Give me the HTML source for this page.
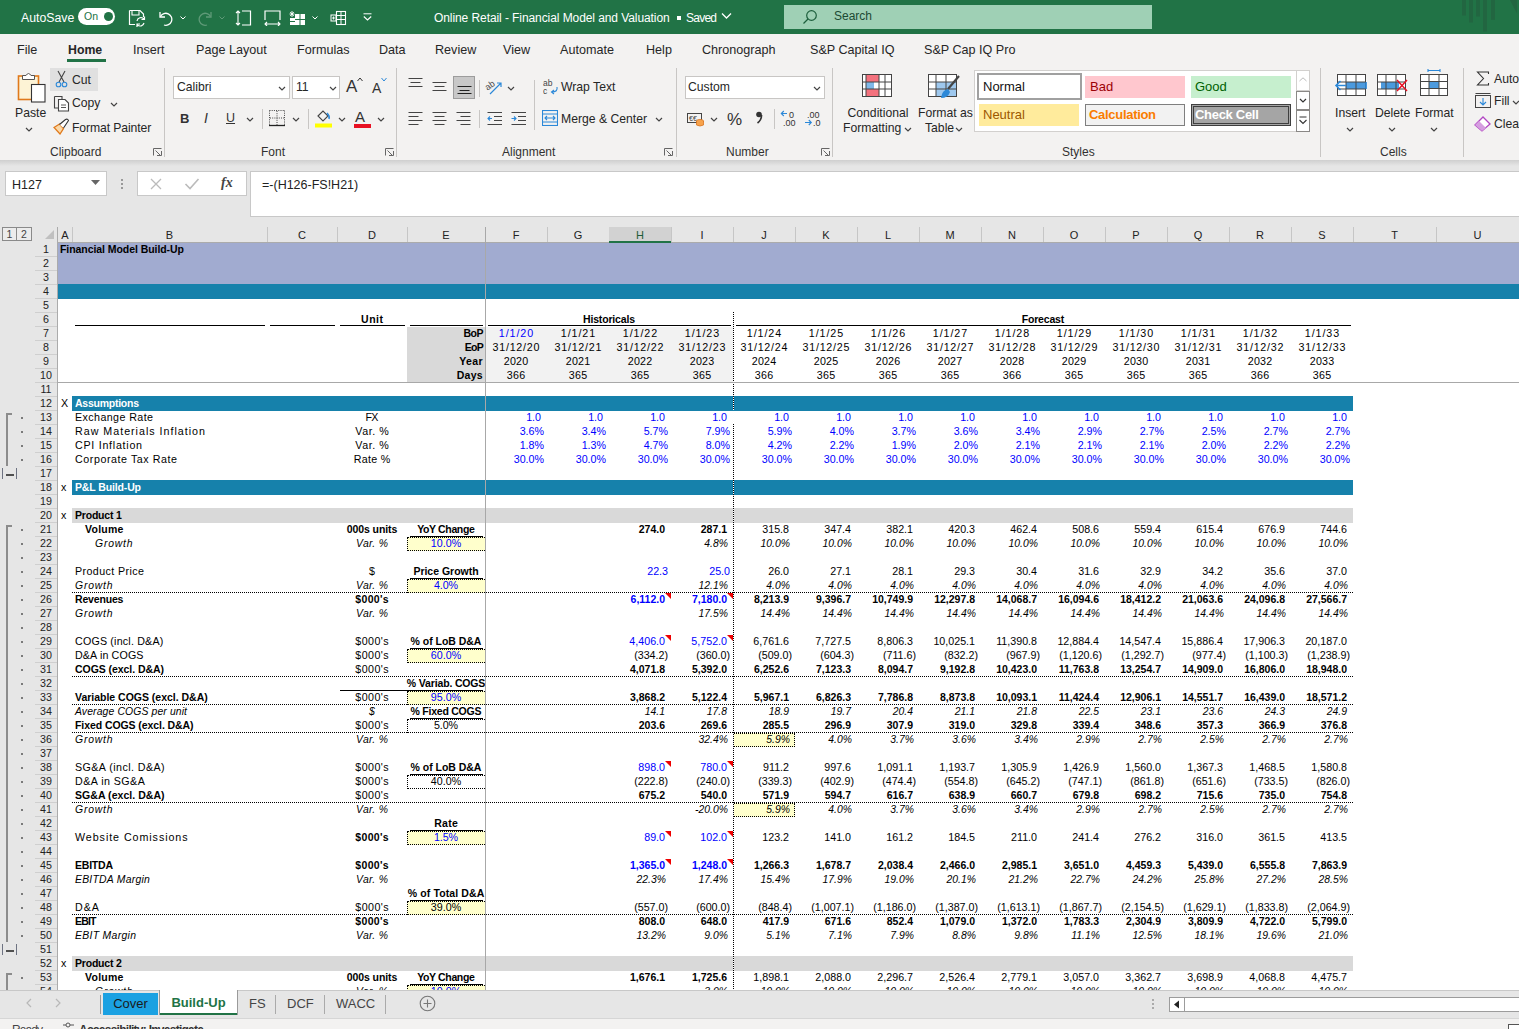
<!DOCTYPE html>
<html><head><meta charset="utf-8"><style>
html,body{margin:0;padding:0;width:1519px;height:1029px;overflow:hidden;background:#fff;}
body{position:relative;font-family:"Liberation Sans", sans-serif;}
body>div,body>svg{position:absolute;}
</style></head><body>
<div style="left:0px;top:0px;width:1519px;height:34px;background:#217346"></div>
<div style="left:21px;top:10px;white-space:pre;color:#fff;font-size:12.3px;line-height:16px;">AutoSave</div>
<div style="left:78px;top:8px;width:37px;height:17px;background:#fff;border-radius:9px"></div>
<div style="left:84px;top:9px;white-space:pre;color:#217346;font-size:10.5px;line-height:15px;">On</div>
<div style="left:104px;top:12px;width:9px;height:9px;background:#217346;border-radius:50%"></div>
<svg style="left:128px;top:9px" width="18" height="18"><path d="M1.5 1.5 H12 L15.5 5 V8 M1.5 1.5 V15.5 H7" stroke="#fff" stroke-width="1.2" fill="none"/><path d="M4 1.5 V6 H11 V1.5" stroke="#fff" stroke-width="1.1" fill="none"/>
<path d="M9 12 A4 4 0 0 1 16 10 M16.5 7.5 V10.5 H13.5 M16 14 A4 4 0 0 1 9.5 16 M9 18 V15 H12" stroke="#fff" stroke-width="1.2" fill="none"/></svg>
<svg style="left:158px;top:10px" width="16" height="16"><path d="M2 2 V7 H7" stroke="#fff" stroke-width="1.3" fill="none"/><path d="M2.5 6.5 A6 6 0 1 1 6 15" stroke="#fff" stroke-width="1.3" fill="none"/></svg>
<svg style="left:180px;top:16px" width="6" height="4"><path d="M0.5 0.5 L3 3 L5.5 0.5" stroke="#fff" stroke-width="1" fill="none"/></svg>
<svg style="left:197px;top:10px" width="16" height="16"><path d="M14 2 V7 H9" stroke="#5f9a78" stroke-width="1.3" fill="none"/><path d="M13.5 6.5 A6 6 0 1 0 10 15" stroke="#5f9a78" stroke-width="1.3" fill="none"/></svg>
<svg style="left:219px;top:16px" width="6" height="4"><path d="M0.5 0.5 L3 3 L5.5 0.5" stroke="#5f9a78" stroke-width="1" fill="none"/></svg>
<svg style="left:235px;top:10px" width="17" height="16"><path d="M7 1 H15.5 V15 H7" stroke="#fff" stroke-width="1.2" fill="none"/><path d="M3 1 V15 M1 3 L3 1 L5 3 M1 13 L3 15 L5 13" stroke="#fff" stroke-width="1.1" fill="none"/></svg>
<svg style="left:264px;top:10px" width="17" height="16"><path d="M1 10 V1 H16 V10" stroke="#fff" stroke-width="1.2" fill="none"/><path d="M1 14 H16 M3 12 L1 14 L3 16 M14 12 L16 14 L14 16" stroke="#fff" stroke-width="1.1" fill="none"/></svg>
<svg style="left:289px;top:10px" width="17" height="16"><rect x="6" y="4" width="10" height="11" fill="#fff"/><rect x="1" y="8" width="5" height="7" fill="#fff"/><path d="M6 9.5 H16 M11 4 V15 M1 11.5 H6" stroke="#217346" stroke-width="1"/><path d="M3 1 V7 M0.5 4 H5.5 M1.2 2 L4.8 6 M4.8 2 L1.2 6" stroke="#fff" stroke-width="0.9"/></svg>
<svg style="left:312px;top:16px" width="6" height="4"><path d="M0.5 0.5 L3 3 L5.5 0.5" stroke="#fff" stroke-width="1" fill="none"/></svg>
<svg style="left:330px;top:10px" width="17" height="16"><rect x="6.5" y="1.5" width="9" height="13" fill="none" stroke="#fff" stroke-width="1.1"/><path d="M6.5 5.5 H15.5 M6.5 9.5 H15.5 M11 1.5 V14.5" stroke="#fff" stroke-width="1"/><rect x="1" y="5" width="5" height="6" fill="none" stroke="#fff" stroke-width="1"/><path d="M3.5 6.5 V9.5 M2 8 H5" stroke="#fff" stroke-width="0.9"/></svg>
<svg style="left:363px;top:13px" width="9" height="8"><path d="M0.5 0.8 H8.5" stroke="#fff" stroke-width="1"/><path d="M0.8 3.5 L4.5 7 L8.2 3.5" stroke="#fff" stroke-width="1.1" fill="none"/></svg>
<svg style="left:1440px;top:0px" width="79" height="34"><g fill="#226641"><rect x="22" y="0" width="4" height="15.5"/><rect x="29" y="0" width="4" height="22.5"/><rect x="36" y="0" width="4" height="16.5"/><rect x="43" y="0" width="4" height="31.5"/><rect x="51" y="0" width="4" height="19.8"/><path d="M70 0 H77 V13.5 Z"/></g></svg>
<div style="left:434px;top:10px;white-space:pre;color:#fff;font-size:12px;line-height:16px;letter-spacing:-0.08px;">Online Retail - Financial Model and Valuation</div>
<div style="left:677px;top:16px;width:4px;height:4px;background:#fff"></div>
<div style="left:686px;top:10px;white-space:pre;color:#fff;font-size:12px;line-height:16px;letter-spacing:-0.758px;">Saved</div>
<svg style="left:721px;top:12px" width="11" height="8"><path d="M1 1.5 L5.5 6 L10 1.5" stroke="#fff" stroke-width="1.3" fill="none"/></svg>
<div style="left:784px;top:5px;width:368px;height:24px;background:#9fd0b5"></div>
<svg style="left:802px;top:9px" width="16" height="16"><circle cx="9.5" cy="6.5" r="4.8" stroke="#1d5e3c" stroke-width="1.2" fill="none"/><path d="M6 10 L1.5 14.5" stroke="#1d5e3c" stroke-width="1.3"/></svg>
<div style="left:834px;top:8px;white-space:pre;color:#1c4a33;font-size:12px;line-height:17px;">Search</div>
<div style="left:0px;top:34px;width:1519px;height:126px;background:#f3f2f1"></div>
<div style="left:17px;top:42px;white-space:pre;color:#262626;font-size:12.6px;line-height:16px;">File</div>
<div style="left:68px;top:42px;white-space:pre;color:#262626;font-size:12.6px;line-height:16px;font-weight:bold;font-size:12.3px;">Home</div>
<div style="left:133px;top:42px;white-space:pre;color:#262626;font-size:12.6px;line-height:16px;">Insert</div>
<div style="left:196px;top:42px;white-space:pre;color:#262626;font-size:12.6px;line-height:16px;">Page Layout</div>
<div style="left:297px;top:42px;white-space:pre;color:#262626;font-size:12.6px;line-height:16px;">Formulas</div>
<div style="left:379px;top:42px;white-space:pre;color:#262626;font-size:12.6px;line-height:16px;">Data</div>
<div style="left:435px;top:42px;white-space:pre;color:#262626;font-size:12.6px;line-height:16px;">Review</div>
<div style="left:503px;top:42px;white-space:pre;color:#262626;font-size:12.6px;line-height:16px;">View</div>
<div style="left:560px;top:42px;white-space:pre;color:#262626;font-size:12.6px;line-height:16px;">Automate</div>
<div style="left:646px;top:42px;white-space:pre;color:#262626;font-size:12.6px;line-height:16px;">Help</div>
<div style="left:702px;top:42px;white-space:pre;color:#262626;font-size:12.6px;line-height:16px;">Chronograph</div>
<div style="left:810px;top:42px;white-space:pre;color:#262626;font-size:12.6px;line-height:16px;">S&amp;P Capital IQ</div>
<div style="left:924px;top:42px;white-space:pre;color:#262626;font-size:12.6px;line-height:16px;">S&amp;P Cap IQ Pro</div>
<div style="left:67px;top:59px;width:39px;height:3px;background:#217346"></div>
<svg style="left:17px;top:71px" width="30" height="33">
<rect x="1.5" y="5" width="20" height="23.5" fill="#fdf3d5" stroke="#e0791b" stroke-width="1.6"/>
<path d="M5.5 8.5 V4.5 H9 Q11.5 0.5 14 4.5 H17.5 V8.5 Z" fill="#fff" stroke="#555" stroke-width="1"/>
<rect x="14.5" y="13.5" width="13.5" height="17.5" fill="#fff" stroke="#333" stroke-width="1.1"/>
</svg>
<div style="left:15px;top:106px;white-space:pre;color:#262626;font-size:12.2px;line-height:15px;">Paste</div>
<svg style="left:25px;top:127px" width="8" height="5"><path d="M1 1 L4 4 L7 1" stroke="#444" stroke-width="1.2" fill="none"/></svg>
<div style="left:50px;top:68px;width:48px;height:23px;background:#e0e0e0"></div>
<svg style="left:55px;top:70px" width="13" height="18">
<path d="M3 1 L9 12 M10 1 L4 12" stroke="#444" stroke-width="1.1"/>
<circle cx="3.5" cy="14.5" r="2.3" stroke="#2b88d8" stroke-width="1.1" fill="none"/><circle cx="9.5" cy="14.5" r="2.3" stroke="#2b88d8" stroke-width="1.1" fill="none"/>
</svg>
<div style="left:72px;top:73px;white-space:pre;color:#262626;font-size:12.2px;line-height:15px;">Cut</div>
<svg style="left:53px;top:95px" width="17" height="17">
<path d="M1.5 1.5 H9 V4 M1.5 1.5 V13 H5" stroke="#444" stroke-width="1.1" fill="none"/>
<path d="M5.5 4.5 H12 L15.5 8 V16 H5.5 Z" stroke="#444" stroke-width="1.1" fill="#fff"/>
<path d="M8 10 H13 M8 12.5 H13" stroke="#444" stroke-width="0.9"/>
</svg>
<div style="left:72px;top:96px;white-space:pre;color:#262626;font-size:12.2px;line-height:15px;">Copy</div>
<svg style="left:110px;top:102px" width="8" height="5"><path d="M1 1 L4 4 L7 1" stroke="#444" stroke-width="1.2" fill="none"/></svg>
<svg style="left:53px;top:118px" width="17" height="17">
<path d="M1 9.5 L6.5 6 L10.5 10.5 L7 16 Z" fill="#fbd9a8" stroke="#e0791b" stroke-width="1.3"/>
<path d="M6.5 6.5 L12.5 1.5 Q14.5 0.5 15.5 2.5 L10.5 10" stroke="#333" stroke-width="1.1" fill="#fff"/>
</svg>
<div style="left:72px;top:121px;white-space:pre;color:#262626;font-size:12.2px;line-height:15px;letter-spacing:-0.1px;">Format Painter</div>
<div style="left:50px;top:145px;white-space:pre;color:#323130;font-size:12px;line-height:15px;">Clipboard</div>
<svg style="left:153px;top:148px" width="9" height="8"><path d="M0.5 7.5 V0.5 H8.5 M8.5 3 V7.5 H4 M2.5 2.5 L7 7" stroke="#666" stroke-width="1" fill="none"/></svg>
<div style="left:164px;top:68px;width:1px;height:89px;background:#c8c6c4"></div>
<div style="left:173px;top:76px;width:117px;height:23px;background:#fff;border:1px solid #c8c6c4;box-sizing:border-box"></div>
<div style="left:177px;top:80px;white-space:pre;color:#262626;font-size:12.2px;line-height:15px;">Calibri</div>
<svg style="left:278px;top:86px" width="8" height="5"><path d="M1 1 L4 4 L7 1" stroke="#444" stroke-width="1.2" fill="none"/></svg>
<div style="left:292px;top:76px;width:48px;height:23px;background:#fff;border:1px solid #c8c6c4;box-sizing:border-box"></div>
<div style="left:296px;top:80px;white-space:pre;color:#262626;font-size:12.2px;line-height:15px;">11</div>
<svg style="left:329px;top:86px" width="8" height="5"><path d="M1 1 L4 4 L7 1" stroke="#444" stroke-width="1.2" fill="none"/></svg>
<div style="left:346px;top:77px;white-space:pre;color:#333;font-size:17px;line-height:19px;">A</div>
<svg style="left:357px;top:77px" width="6" height="5"><path d="M0.5 4 L3 1 L5.5 4" stroke="#333" stroke-width="1" fill="none"/></svg>
<div style="left:372px;top:80px;white-space:pre;color:#333;font-size:14px;line-height:17px;">A</div>
<svg style="left:381px;top:77px" width="6" height="5"><path d="M0.5 1 L3 4 L5.5 1" stroke="#2b88d8" stroke-width="1" fill="none"/></svg>
<div style="left:180px;top:111px;white-space:pre;color:#333;font-size:13px;font-weight:bold;line-height:16px;">B</div>
<div style="left:204px;top:110px;white-space:pre;color:#333;font-size:14px;font-style:italic;line-height:17px;">I</div>
<div style="left:226px;top:110px;white-space:pre;color:#333;font-size:12.5px;line-height:16px;text-decoration:underline;">U</div>
<svg style="left:246px;top:117px" width="8" height="5"><path d="M1 1 L4 4 L7 1" stroke="#444" stroke-width="1.2" fill="none"/></svg>
<div style="left:262px;top:109px;width:1px;height:20px;background:#c8c6c4"></div>
<svg style="left:269px;top:110px" width="16" height="17"><path d="M0.5 0.5 H15.5 M0.5 0.5 V15 M15.5 0.5 V15 M8 1 V15 M1 8 H15" stroke="#444" stroke-width="1" stroke-dasharray="1 1.2" fill="none"/><path d="M0 15.5 H16" stroke="#222" stroke-width="1.3"/></svg>
<svg style="left:292px;top:117px" width="8" height="5"><path d="M1 1 L4 4 L7 1" stroke="#444" stroke-width="1.2" fill="none"/></svg>
<div style="left:308px;top:109px;width:1px;height:20px;background:#c8c6c4"></div>
<svg style="left:315px;top:108px" width="18" height="20"><path d="M3 8 L8 3 L13 8 L8 13 Z" fill="none" stroke="#444" stroke-width="1.1"/><path d="M12 5 Q15 8 14 11" stroke="#2b88d8" stroke-width="1.5" fill="none"/><rect x="0" y="15.5" width="17" height="4" fill="#ffff00"/></svg>
<svg style="left:338px;top:117px" width="8" height="5"><path d="M1 1 L4 4 L7 1" stroke="#444" stroke-width="1.2" fill="none"/></svg>
<div style="left:355px;top:108px;white-space:pre;color:#333;font-size:15px;line-height:17px;">A</div>
<div style="left:354px;top:124px;width:17px;height:4px;background:#e81123"></div>
<svg style="left:377px;top:117px" width="8" height="5"><path d="M1 1 L4 4 L7 1" stroke="#444" stroke-width="1.2" fill="none"/></svg>
<div style="left:261px;top:145px;white-space:pre;color:#323130;font-size:12px;line-height:15px;">Font</div>
<svg style="left:385px;top:148px" width="9" height="8"><path d="M0.5 7.5 V0.5 H8.5 M8.5 3 V7.5 H4 M2.5 2.5 L7 7" stroke="#666" stroke-width="1" fill="none"/></svg>
<div style="left:396px;top:68px;width:1px;height:89px;background:#c8c6c4"></div>
<svg style="left:408px;top:77px" width="16" height="14"><path d="M0.5 1.5 H14.5 M2.5 5.5 H12.5 M0.5 9.5 H14.5 " stroke="#444" stroke-width="1.1"/></svg>
<svg style="left:432px;top:79px" width="16" height="14"><path d="M0.5 3.5 H14.5 M2.5 7.5 H12.5 M0.5 11.5 H14.5 " stroke="#444" stroke-width="1.1"/></svg>
<div style="left:453px;top:76px;width:22px;height:23px;background:#c8c8c8;border:1px solid #9c9c9c;box-sizing:border-box"></div>
<svg style="left:457px;top:81px" width="16" height="14"><path d="M0.5 5.5 H14.5 M2.5 9.5 H12.5 M0.5 12.5 H14.5 " stroke="#222" stroke-width="1.1"/></svg>
<div style="left:479px;top:80px;width:1px;height:17px;background:#c8c6c4"></div>
<svg style="left:485px;top:79px" width="20" height="17"><text x="1" y="9" font-size="9" font-family="Liberation Sans" fill="#444" transform="rotate(-35 6 8)">ab</text><path d="M5 15 L16 4 M12 4 H16 V8" stroke="#2b88d8" stroke-width="1.2" fill="none"/></svg>
<svg style="left:507px;top:86px" width="8" height="5"><path d="M1 1 L4 4 L7 1" stroke="#444" stroke-width="1.2" fill="none"/></svg>
<div style="left:534px;top:80px;width:1px;height:50px;background:#c8c6c4"></div>
<svg style="left:543px;top:78px" width="16" height="18"><text x="0" y="8" font-size="8.5" font-family="Liberation Sans" fill="#444">ab</text><text x="0" y="16" font-size="8.5" font-family="Liberation Sans" fill="#444">c</text><path d="M14 9 Q15 14 9 14 M11 12 L8.5 14 L11 16" stroke="#2b88d8" stroke-width="1.1" fill="none"/></svg>
<div style="left:561px;top:80px;white-space:pre;color:#262626;font-size:12.2px;line-height:15px;">Wrap Text</div>
<svg style="left:408px;top:111px" width="16" height="14"><path d="M0.5 1.5 H14.5 M0.5 5.5 H10.5 M0.5 9.5 H14.5 M0.5 13.5 H10.5 " stroke="#444" stroke-width="1.1"/></svg>
<svg style="left:432px;top:111px" width="16" height="14"><path d="M0.5 1.5 H14.5 M2.5 5.5 H12.5 M0.5 9.5 H14.5 M2.5 13.5 H12.5 " stroke="#444" stroke-width="1.1"/></svg>
<svg style="left:456px;top:111px" width="16" height="14"><path d="M0.5 1.5 H14.5 M4.5 5.5 H14.5 M0.5 9.5 H14.5 M4.5 13.5 H14.5 " stroke="#444" stroke-width="1.1"/></svg>
<div style="left:479px;top:110px;width:1px;height:18px;background:#c8c6c4"></div>
<svg style="left:487px;top:111px" width="16" height="14"><path d="M0.5 1.5 H15 M7 5.5 H15 M7 9.5 H15 M0.5 13.5 H15" stroke="#444" stroke-width="1.1"/><path d="M5 7.5 H0.8 M3 5.5 L1 7.5 L3 9.5" stroke="#2b88d8" stroke-width="1.1" fill="none"/></svg>
<svg style="left:511px;top:111px" width="16" height="14"><path d="M0.5 1.5 H15 M7 5.5 H15 M7 9.5 H15 M0.5 13.5 H15" stroke="#444" stroke-width="1.1"/><path d="M0.5 7.5 H5 M3 5.5 L5 7.5 L3 9.5" stroke="#2b88d8" stroke-width="1.1" fill="none"/></svg>
<svg style="left:542px;top:110px" width="16" height="16"><rect x="0.5" y="0.5" width="15" height="15" fill="none" stroke="#2b88d8" stroke-width="1.1"/><path d="M0.5 4 H15.5 M0.5 12 H15.5" stroke="#2b88d8"/><path d="M3 8 H13 M5 6 L3 8 L5 10 M11 6 L13 8 L11 10" stroke="#2b88d8" stroke-width="1.1" fill="none"/></svg>
<div style="left:561px;top:112px;white-space:pre;color:#262626;font-size:12.2px;line-height:15px;">Merge &amp; Center</div>
<svg style="left:655px;top:117px" width="8" height="5"><path d="M1 1 L4 4 L7 1" stroke="#444" stroke-width="1.2" fill="none"/></svg>
<div style="left:502px;top:145px;white-space:pre;color:#323130;font-size:12px;line-height:15px;">Alignment</div>
<svg style="left:664px;top:148px" width="9" height="8"><path d="M0.5 7.5 V0.5 H8.5 M8.5 3 V7.5 H4 M2.5 2.5 L7 7" stroke="#666" stroke-width="1" fill="none"/></svg>
<div style="left:676px;top:68px;width:1px;height:89px;background:#c8c6c4"></div>
<div style="left:685px;top:76px;width:140px;height:23px;background:#fff;border:1px solid #c8c6c4;box-sizing:border-box"></div>
<div style="left:688px;top:80px;white-space:pre;color:#262626;font-size:12.2px;line-height:15px;">Custom</div>
<svg style="left:813px;top:86px" width="8" height="5"><path d="M1 1 L4 4 L7 1" stroke="#444" stroke-width="1.2" fill="none"/></svg>
<svg style="left:687px;top:111px" width="18" height="16"><rect x="0.5" y="2.5" width="14" height="9" fill="none" stroke="#444"/><text x="2" y="10" font-size="7" font-family="Liberation Sans" fill="#444">€€</text><ellipse cx="13" cy="10" rx="3.5" ry="1.6" fill="#f7a24b" stroke="#d8751f" stroke-width="0.8"/><path d="M9.5 10 V14 Q13 16 16.5 14 V10" fill="#f7a24b" stroke="#d8751f" stroke-width="0.8"/></svg>
<svg style="left:710px;top:117px" width="8" height="5"><path d="M1 1 L4 4 L7 1" stroke="#444" stroke-width="1.2" fill="none"/></svg>
<div style="left:727px;top:110px;white-space:pre;color:#333;font-size:17px;line-height:19px;">%</div>
<svg style="left:755px;top:111px" width="8" height="14"><circle cx="4" cy="3.5" r="2.8" fill="#333"/><path d="M6.6 4 Q6.5 9 2.5 12" stroke="#333" stroke-width="1.6" fill="none"/></svg>
<div style="left:774px;top:109px;width:1px;height:20px;background:#c8c6c4"></div>
<svg style="left:780px;top:109px" width="19" height="18"><path d="M7 4.5 H1.5 M3.8 2 L1.3 4.5 L3.8 7" stroke="#2b88d8" stroke-width="1.1" fill="none"/><text x="9" y="8.5" font-size="9" font-family="Liberation Sans" fill="#333">0</text><text x="3" y="17" font-size="9" font-family="Liberation Sans" fill="#333">.00</text></svg>
<svg style="left:804px;top:109px" width="19" height="18"><text x="3" y="8.5" font-size="9" font-family="Liberation Sans" fill="#333">.00</text><path d="M1 13.5 H7 M4.8 11 L7.3 13.5 L4.8 16" stroke="#2b88d8" stroke-width="1.1" fill="none"/><text x="9" y="17" font-size="9" font-family="Liberation Sans" fill="#333">.0</text></svg>
<div style="left:726px;top:145px;white-space:pre;color:#323130;font-size:12px;line-height:15px;">Number</div>
<svg style="left:821px;top:148px" width="9" height="8"><path d="M0.5 7.5 V0.5 H8.5 M8.5 3 V7.5 H4 M2.5 2.5 L7 7" stroke="#666" stroke-width="1" fill="none"/></svg>
<div style="left:832px;top:68px;width:1px;height:89px;background:#c8c6c4"></div>
<svg style="left:862px;top:74px" width="31" height="24"><rect x="0.5" y="0.5" width="29" height="22" fill="#fff" stroke="#444"/>
<rect x="4" y="1" width="13" height="7" fill="#f4727e"/><rect x="4" y="8" width="8" height="7" fill="#2b88d8" opacity="0.6"/><rect x="4" y="15" width="13" height="7" fill="#f4727e"/>
<path d="M4 0.5 V22.5 M17 0.5 V22.5 M23 0.5 V22.5 M0.5 8 H29.5 M0.5 15 H29.5" stroke="#444" stroke-width="1"/></svg>
<div style="left:846px;top:106px;width:64px;white-space:pre;color:#262626;font-size:12.2px;line-height:15px;text-align:center;">Conditional</div>
<div style="left:843px;top:121px;white-space:pre;color:#262626;font-size:12.2px;line-height:15px;">Formatting</div>
<svg style="left:904px;top:127px" width="8" height="5"><path d="M1 1 L4 4 L7 1" stroke="#444" stroke-width="1.2" fill="none"/></svg>
<svg style="left:928px;top:74px" width="33" height="26"><rect x="0.5" y="0.5" width="28" height="22" fill="#fff" stroke="#444"/>
<rect x="8" y="8" width="20" height="14" fill="#9ec8ee"/>
<path d="M8 0.5 V22.5 M18 0.5 V22.5 M0.5 8 H28.5 M0.5 15 H28.5" stroke="#444" stroke-width="1"/>
<path d="M31 2 L20 15" stroke="#444" stroke-width="2.2"/><path d="M20 15 Q14 16 13 24 Q20 24 22 18 Z" fill="#2b88d8"/></svg>
<div style="left:918px;top:106px;white-space:pre;color:#262626;font-size:12.2px;line-height:15px;">Format as</div>
<div style="left:925px;top:121px;white-space:pre;color:#262626;font-size:12.2px;line-height:15px;">Table</div>
<svg style="left:955px;top:127px" width="8" height="5"><path d="M1 1 L4 4 L7 1" stroke="#444" stroke-width="1.2" fill="none"/></svg>
<div style="left:974px;top:70px;width:336px;height:62px;background:#fff;border:1px solid #d2d0ce;box-sizing:border-box"></div>
<div style="left:977px;top:73px;width:105px;height:27px;background:#fff;border:2px solid #a0a0a0;box-sizing:border-box"></div>
<div style="left:983px;top:79px;white-space:pre;color:#111;font-size:13px;line-height:15px;">Normal</div>
<div style="left:1085px;top:76px;width:100px;height:22px;background:#ffc7ce"></div>
<div style="left:1090px;top:79px;white-space:pre;color:#9c0006;font-size:13px;line-height:15px;">Bad</div>
<div style="left:1191px;top:76px;width:100px;height:22px;background:#c6efce"></div>
<div style="left:1195px;top:79px;white-space:pre;color:#006100;font-size:13px;line-height:15px;">Good</div>
<div style="left:979px;top:104px;width:100px;height:22px;background:#ffeb9c"></div>
<div style="left:983px;top:107px;white-space:pre;color:#9c5700;font-size:13px;line-height:15px;">Neutral</div>
<div style="left:1085px;top:104px;width:100px;height:22px;background:#f2f2f2;border:1px solid #7f7f7f;box-sizing:border-box"></div>
<div style="left:1089px;top:107px;white-space:pre;color:#fa7d00;font-size:13px;font-weight:bold;line-height:15px;letter-spacing:-0.3px;">Calculation</div>
<div style="left:1191px;top:104px;width:100px;height:22px;background:#a5a5a5;border:3px double #3f3f3f;box-sizing:border-box"></div>
<div style="left:1195px;top:107px;white-space:pre;color:#fff;font-size:13px;font-weight:bold;line-height:15px;letter-spacing:-0.3px;">Check Cell</div>
<div style="left:1296px;top:70px;width:14px;height:21px;background:#fff;border:1px solid #d2d0ce;box-sizing:border-box"></div>
<svg style="left:1299px;top:77px" width="8" height="5"><path d="M0.5 4 L4 0.8 L7.5 4" stroke="#bbb" stroke-width="1" fill="none"/></svg>
<div style="left:1296px;top:91px;width:14px;height:19px;background:#fff;border:1px solid #8a8886;box-sizing:border-box"></div>
<svg style="left:1299px;top:98px" width="8" height="5"><path d="M1 1 L4 4 L7 1" stroke="#333" stroke-width="1.2" fill="none"/></svg>
<div style="left:1296px;top:110px;width:14px;height:22px;background:#fff;border:1px solid #8a8886;box-sizing:border-box"></div>
<svg style="left:1299px;top:116px" width="8" height="9"><path d="M0.5 1 H7.5" stroke="#333"/><path d="M0.5 4 L4 7.5 L7.5 4" stroke="#333" stroke-width="1.1" fill="none"/></svg>
<div style="left:1062px;top:145px;white-space:pre;color:#323130;font-size:12px;line-height:15px;">Styles</div>
<div style="left:1320px;top:68px;width:1px;height:89px;background:#c8c6c4"></div>
<svg style="left:1334px;top:74px" width="34" height="23"><rect x="3.5" y="0.5" width="28" height="21" fill="#fff" stroke="#444"/>
<rect x="12" y="8" width="21" height="7" fill="#2b88d8" opacity="0.85"/>
<path d="M12 0.5 V21.5 M22 0.5 V21.5 M3.5 8 H31.5 M3.5 15 H31.5" stroke="#444"/>
<path d="M12 11.5 H2 M6.5 7 L2 11.5 L6.5 16" stroke="#2b88d8" stroke-width="1.6" fill="none"/></svg>
<div style="left:1335px;top:106px;white-space:pre;color:#262626;font-size:12.2px;line-height:15px;">Insert</div>
<svg style="left:1346px;top:127px" width="8" height="5"><path d="M1 1 L4 4 L7 1" stroke="#444" stroke-width="1.2" fill="none"/></svg>
<svg style="left:1377px;top:74px" width="32" height="23"><rect x="0.5" y="0.5" width="28" height="21" fill="#fff" stroke="#444"/>
<rect x="4" y="8" width="18" height="7" fill="#2b88d8" opacity="0.85"/>
<path d="M9 0.5 V21.5 M19 0.5 V21.5 M0.5 8 H28.5 M0.5 15 H28.5" stroke="#444"/>
<path d="M20 6 L30 17 M30 6 L20 17" stroke="#e81123" stroke-width="1.5"/></svg>
<div style="left:1375px;top:106px;white-space:pre;color:#262626;font-size:12.2px;line-height:15px;">Delete</div>
<svg style="left:1388px;top:127px" width="8" height="5"><path d="M1 1 L4 4 L7 1" stroke="#444" stroke-width="1.2" fill="none"/></svg>
<svg style="left:1420px;top:69px" width="29" height="28"><path d="M8 1.5 H20 M8 0 V3 M20 0 V3" stroke="#2b88d8" stroke-width="1.1"/>
<rect x="0.5" y="5.5" width="27" height="21" fill="#fff" stroke="#444"/>
<rect x="9" y="12.5" width="10" height="7" fill="#2b88d8" opacity="0.85"/>
<path d="M9 5.5 V26.5 M19 5.5 V26.5 M0.5 12.5 H27.5 M0.5 19.5 H27.5" stroke="#444"/></svg>
<div style="left:1415px;top:106px;white-space:pre;color:#262626;font-size:12.2px;line-height:15px;">Format</div>
<svg style="left:1430px;top:127px" width="8" height="5"><path d="M1 1 L4 4 L7 1" stroke="#444" stroke-width="1.2" fill="none"/></svg>
<div style="left:1380px;top:145px;white-space:pre;color:#323130;font-size:12px;line-height:15px;">Cells</div>
<div style="left:1463px;top:68px;width:1px;height:89px;background:#c8c6c4"></div>
<svg style="left:1476px;top:71px" width="14" height="15"><path d="M12.5 3 V1 H1.5 L7.5 7.5 L1.5 14 H12.5 V12" stroke="#333" stroke-width="1.1" fill="none"/></svg>
<div style="left:1494px;top:72px;white-space:pre;color:#262626;font-size:12.2px;line-height:15px;">AutoSum</div>
<svg style="left:1475px;top:93px" width="17" height="15"><rect x="0.5" y="2.5" width="15" height="12" fill="none" stroke="#444"/><path d="M0.5 0.5 H15.5" stroke="#444"/><path d="M8 5 V12 M5 9 L8 12 L11 9" stroke="#2b88d8" stroke-width="1.1" fill="none"/></svg>
<div style="left:1494px;top:94px;white-space:pre;color:#262626;font-size:12.2px;line-height:15px;">Fill</div>
<svg style="left:1512px;top:100px" width="8" height="5"><path d="M1 1 L4 4 L7 1" stroke="#444" stroke-width="1.2" fill="none"/></svg>
<svg style="left:1474px;top:116px" width="17" height="16"><path d="M1 9 L9 1 L16 8 L8 15 Z" fill="#fff" stroke="#b146c2" stroke-width="1.3"/><path d="M1 9 L5 5 L12 12 L8 15 Z" fill="#d59ee0"/></svg>
<div style="left:1494px;top:117px;white-space:pre;color:#262626;font-size:12.2px;line-height:15px;">Clear</div>
<div style="left:0px;top:160px;width:1519px;height:67px;background:#e6e6e6"></div>
<div style="left:0px;top:160px;width:1519px;height:6px;background:linear-gradient(#cfcfcf,#e6e6e6)"></div>
<div style="left:5px;top:171px;width:102px;height:25px;background:#fff;border:1px solid #c8c8c8;box-sizing:border-box"></div>
<div style="left:12px;top:177px;white-space:pre;color:#222;font-size:12.5px;line-height:16px;">H127</div>
<svg style="left:91px;top:180px" width="10" height="6"><path d="M0 0 L9 0 L4.5 5 Z" fill="#666"/></svg>
<div style="left:121px;top:179px;width:2px;height:2px;background:#999"></div>
<div style="left:121px;top:183px;width:2px;height:2px;background:#999"></div>
<div style="left:121px;top:187px;width:2px;height:2px;background:#999"></div>
<div style="left:137px;top:171px;width:110px;height:25px;background:#fff;border:1px solid #c8c8c8;box-sizing:border-box"></div>
<svg style="left:149px;top:177px" width="14" height="14"><path d="M2 2 L12 12 M12 2 L2 12" stroke="#bbb" stroke-width="1.3"/></svg>
<svg style="left:184px;top:177px" width="16" height="14"><path d="M1.5 7 L6 11.5 L14.5 2" stroke="#bbb" stroke-width="1.6" fill="none"/></svg>
<div style="left:221px;top:174px;white-space:pre;color:#444;font-family:'Liberation Serif';font-style:italic;font-weight:bold;font-size:14px;line-height:18px;">fx</div>
<div style="left:250px;top:171px;width:1269px;height:46px;background:#fff;border:1px solid #c8c8c8;border-right:none;box-sizing:border-box"></div>
<div style="left:262px;top:177px;white-space:pre;color:#222;font-size:12.5px;line-height:16px;">=-(H126-FS!H21)</div>
<div style="left:58px;top:242px;width:1461px;height:748px;background:#fff"></div>
<div style="left:0px;top:227px;width:1519px;height:15px;background:#e6e6e6"></div>
<div style="left:0px;top:242px;width:1519px;height:1px;background:#ababab"></div>
<div style="left:0px;top:242px;width:58px;height:748px;background:#e6e6e6"></div>
<div style="left:57px;top:227px;width:1px;height:763px;background:#ababab"></div>
<div style="left:35px;top:256px;width:22px;height:1px;background:#cfcfcf"></div>
<div style="left:35px;top:270px;width:22px;height:1px;background:#cfcfcf"></div>
<div style="left:35px;top:284px;width:22px;height:1px;background:#cfcfcf"></div>
<div style="left:35px;top:298px;width:22px;height:1px;background:#cfcfcf"></div>
<div style="left:35px;top:312px;width:22px;height:1px;background:#cfcfcf"></div>
<div style="left:35px;top:326px;width:22px;height:1px;background:#cfcfcf"></div>
<div style="left:35px;top:340px;width:22px;height:1px;background:#cfcfcf"></div>
<div style="left:35px;top:354px;width:22px;height:1px;background:#cfcfcf"></div>
<div style="left:35px;top:368px;width:22px;height:1px;background:#cfcfcf"></div>
<div style="left:35px;top:382px;width:22px;height:1px;background:#cfcfcf"></div>
<div style="left:35px;top:396px;width:22px;height:1px;background:#cfcfcf"></div>
<div style="left:35px;top:410px;width:22px;height:1px;background:#cfcfcf"></div>
<div style="left:35px;top:424px;width:22px;height:1px;background:#cfcfcf"></div>
<div style="left:35px;top:438px;width:22px;height:1px;background:#cfcfcf"></div>
<div style="left:35px;top:452px;width:22px;height:1px;background:#cfcfcf"></div>
<div style="left:35px;top:466px;width:22px;height:1px;background:#cfcfcf"></div>
<div style="left:35px;top:480px;width:22px;height:1px;background:#cfcfcf"></div>
<div style="left:35px;top:494px;width:22px;height:1px;background:#cfcfcf"></div>
<div style="left:35px;top:508px;width:22px;height:1px;background:#cfcfcf"></div>
<div style="left:35px;top:522px;width:22px;height:1px;background:#cfcfcf"></div>
<div style="left:35px;top:536px;width:22px;height:1px;background:#cfcfcf"></div>
<div style="left:35px;top:550px;width:22px;height:1px;background:#cfcfcf"></div>
<div style="left:35px;top:564px;width:22px;height:1px;background:#cfcfcf"></div>
<div style="left:35px;top:578px;width:22px;height:1px;background:#cfcfcf"></div>
<div style="left:35px;top:592px;width:22px;height:1px;background:#cfcfcf"></div>
<div style="left:35px;top:606px;width:22px;height:1px;background:#cfcfcf"></div>
<div style="left:35px;top:620px;width:22px;height:1px;background:#cfcfcf"></div>
<div style="left:35px;top:634px;width:22px;height:1px;background:#cfcfcf"></div>
<div style="left:35px;top:648px;width:22px;height:1px;background:#cfcfcf"></div>
<div style="left:35px;top:662px;width:22px;height:1px;background:#cfcfcf"></div>
<div style="left:35px;top:676px;width:22px;height:1px;background:#cfcfcf"></div>
<div style="left:35px;top:690px;width:22px;height:1px;background:#cfcfcf"></div>
<div style="left:35px;top:704px;width:22px;height:1px;background:#cfcfcf"></div>
<div style="left:35px;top:718px;width:22px;height:1px;background:#cfcfcf"></div>
<div style="left:35px;top:732px;width:22px;height:1px;background:#cfcfcf"></div>
<div style="left:35px;top:746px;width:22px;height:1px;background:#cfcfcf"></div>
<div style="left:35px;top:760px;width:22px;height:1px;background:#cfcfcf"></div>
<div style="left:35px;top:774px;width:22px;height:1px;background:#cfcfcf"></div>
<div style="left:35px;top:788px;width:22px;height:1px;background:#cfcfcf"></div>
<div style="left:35px;top:802px;width:22px;height:1px;background:#cfcfcf"></div>
<div style="left:35px;top:816px;width:22px;height:1px;background:#cfcfcf"></div>
<div style="left:35px;top:830px;width:22px;height:1px;background:#cfcfcf"></div>
<div style="left:35px;top:844px;width:22px;height:1px;background:#cfcfcf"></div>
<div style="left:35px;top:858px;width:22px;height:1px;background:#cfcfcf"></div>
<div style="left:35px;top:872px;width:22px;height:1px;background:#cfcfcf"></div>
<div style="left:35px;top:886px;width:22px;height:1px;background:#cfcfcf"></div>
<div style="left:35px;top:900px;width:22px;height:1px;background:#cfcfcf"></div>
<div style="left:35px;top:914px;width:22px;height:1px;background:#cfcfcf"></div>
<div style="left:35px;top:928px;width:22px;height:1px;background:#cfcfcf"></div>
<div style="left:35px;top:942px;width:22px;height:1px;background:#cfcfcf"></div>
<div style="left:35px;top:956px;width:22px;height:1px;background:#cfcfcf"></div>
<div style="left:35px;top:970px;width:22px;height:1px;background:#cfcfcf"></div>
<div style="left:35px;top:984px;width:22px;height:1px;background:#cfcfcf"></div>
<div style="left:72px;top:227px;width:1px;height:15px;background:#c6c6c6"></div>
<div style="left:58px;top:228px;width:14px;white-space:pre;color:#222;font-size:11px;line-height:15px;text-align:center;">A</div>
<div style="left:267px;top:227px;width:1px;height:15px;background:#c6c6c6"></div>
<div style="left:72px;top:228px;width:195px;white-space:pre;color:#222;font-size:11px;line-height:15px;text-align:center;">B</div>
<div style="left:337px;top:227px;width:1px;height:15px;background:#c6c6c6"></div>
<div style="left:267px;top:228px;width:70px;white-space:pre;color:#222;font-size:11px;line-height:15px;text-align:center;">C</div>
<div style="left:407px;top:227px;width:1px;height:15px;background:#c6c6c6"></div>
<div style="left:337px;top:228px;width:70px;white-space:pre;color:#222;font-size:11px;line-height:15px;text-align:center;">D</div>
<div style="left:485px;top:227px;width:1px;height:15px;background:#c6c6c6"></div>
<div style="left:407px;top:228px;width:78px;white-space:pre;color:#222;font-size:11px;line-height:15px;text-align:center;">E</div>
<div style="left:547px;top:227px;width:1px;height:15px;background:#c6c6c6"></div>
<div style="left:485px;top:228px;width:62px;white-space:pre;color:#222;font-size:11px;line-height:15px;text-align:center;">F</div>
<div style="left:609px;top:227px;width:1px;height:15px;background:#c6c6c6"></div>
<div style="left:547px;top:228px;width:62px;white-space:pre;color:#222;font-size:11px;line-height:15px;text-align:center;">G</div>
<div style="left:609px;top:227px;width:62px;height:15px;background:#d2d2d2"></div>
<div style="left:609px;top:241px;width:62px;height:2px;background:#217346"></div>
<div style="left:671px;top:227px;width:1px;height:15px;background:#c6c6c6"></div>
<div style="left:609px;top:228px;width:62px;white-space:pre;color:#1e5c38;font-size:11px;line-height:15px;text-align:center;">H</div>
<div style="left:733px;top:227px;width:1px;height:15px;background:#c6c6c6"></div>
<div style="left:671px;top:228px;width:62px;white-space:pre;color:#222;font-size:11px;line-height:15px;text-align:center;">I</div>
<div style="left:795px;top:227px;width:1px;height:15px;background:#c6c6c6"></div>
<div style="left:733px;top:228px;width:62px;white-space:pre;color:#222;font-size:11px;line-height:15px;text-align:center;">J</div>
<div style="left:857px;top:227px;width:1px;height:15px;background:#c6c6c6"></div>
<div style="left:795px;top:228px;width:62px;white-space:pre;color:#222;font-size:11px;line-height:15px;text-align:center;">K</div>
<div style="left:919px;top:227px;width:1px;height:15px;background:#c6c6c6"></div>
<div style="left:857px;top:228px;width:62px;white-space:pre;color:#222;font-size:11px;line-height:15px;text-align:center;">L</div>
<div style="left:981px;top:227px;width:1px;height:15px;background:#c6c6c6"></div>
<div style="left:919px;top:228px;width:62px;white-space:pre;color:#222;font-size:11px;line-height:15px;text-align:center;">M</div>
<div style="left:1043px;top:227px;width:1px;height:15px;background:#c6c6c6"></div>
<div style="left:981px;top:228px;width:62px;white-space:pre;color:#222;font-size:11px;line-height:15px;text-align:center;">N</div>
<div style="left:1105px;top:227px;width:1px;height:15px;background:#c6c6c6"></div>
<div style="left:1043px;top:228px;width:62px;white-space:pre;color:#222;font-size:11px;line-height:15px;text-align:center;">O</div>
<div style="left:1167px;top:227px;width:1px;height:15px;background:#c6c6c6"></div>
<div style="left:1105px;top:228px;width:62px;white-space:pre;color:#222;font-size:11px;line-height:15px;text-align:center;">P</div>
<div style="left:1229px;top:227px;width:1px;height:15px;background:#c6c6c6"></div>
<div style="left:1167px;top:228px;width:62px;white-space:pre;color:#222;font-size:11px;line-height:15px;text-align:center;">Q</div>
<div style="left:1291px;top:227px;width:1px;height:15px;background:#c6c6c6"></div>
<div style="left:1229px;top:228px;width:62px;white-space:pre;color:#222;font-size:11px;line-height:15px;text-align:center;">R</div>
<div style="left:1353px;top:227px;width:1px;height:15px;background:#c6c6c6"></div>
<div style="left:1291px;top:228px;width:62px;white-space:pre;color:#222;font-size:11px;line-height:15px;text-align:center;">S</div>
<div style="left:1436px;top:227px;width:1px;height:15px;background:#c6c6c6"></div>
<div style="left:1353px;top:228px;width:83px;white-space:pre;color:#222;font-size:11px;line-height:15px;text-align:center;">T</div>
<div style="left:1519px;top:227px;width:1px;height:15px;background:#c6c6c6"></div>
<div style="left:1436px;top:228px;width:83px;white-space:pre;color:#222;font-size:11px;line-height:15px;text-align:center;">U</div>
<svg style="left:45px;top:230px" width="10" height="10"><path d="M9 0 L9 9 L0 9 Z" fill="#c0c0c0"/></svg>
<div style="left:2px;top:227px;width:15px;height:14px;border:1px solid #8a8a8a;box-sizing:border-box;background:#ececec"></div>
<div style="left:16px;top:227px;width:16px;height:14px;border:1px solid #8a8a8a;box-sizing:border-box;background:#ececec"></div>
<div style="left:2px;top:227px;width:15px;white-space:pre;color:#444;font-size:10.5px;line-height:14px;text-align:center;">1</div>
<div style="left:16px;top:227px;width:16px;white-space:pre;color:#444;font-size:10.5px;line-height:14px;text-align:center;">2</div>
<div style="left:35px;top:242px;width:22px;white-space:pre;color:#222;font-size:10.7px;line-height:14px;text-align:center;">1</div>
<div style="left:35px;top:256px;width:22px;white-space:pre;color:#222;font-size:10.7px;line-height:14px;text-align:center;">2</div>
<div style="left:35px;top:270px;width:22px;white-space:pre;color:#222;font-size:10.7px;line-height:14px;text-align:center;">3</div>
<div style="left:35px;top:284px;width:22px;white-space:pre;color:#222;font-size:10.7px;line-height:14px;text-align:center;">4</div>
<div style="left:35px;top:298px;width:22px;white-space:pre;color:#222;font-size:10.7px;line-height:14px;text-align:center;">5</div>
<div style="left:35px;top:312px;width:22px;white-space:pre;color:#222;font-size:10.7px;line-height:14px;text-align:center;">6</div>
<div style="left:35px;top:326px;width:22px;white-space:pre;color:#222;font-size:10.7px;line-height:14px;text-align:center;">7</div>
<div style="left:35px;top:340px;width:22px;white-space:pre;color:#222;font-size:10.7px;line-height:14px;text-align:center;">8</div>
<div style="left:35px;top:354px;width:22px;white-space:pre;color:#222;font-size:10.7px;line-height:14px;text-align:center;">9</div>
<div style="left:35px;top:368px;width:22px;white-space:pre;color:#222;font-size:10.7px;line-height:14px;text-align:center;">10</div>
<div style="left:35px;top:382px;width:22px;white-space:pre;color:#222;font-size:10.7px;line-height:14px;text-align:center;">11</div>
<div style="left:35px;top:396px;width:22px;white-space:pre;color:#222;font-size:10.7px;line-height:14px;text-align:center;">12</div>
<div style="left:35px;top:410px;width:22px;white-space:pre;color:#222;font-size:10.7px;line-height:14px;text-align:center;">13</div>
<div style="left:35px;top:424px;width:22px;white-space:pre;color:#222;font-size:10.7px;line-height:14px;text-align:center;">14</div>
<div style="left:35px;top:438px;width:22px;white-space:pre;color:#222;font-size:10.7px;line-height:14px;text-align:center;">15</div>
<div style="left:35px;top:452px;width:22px;white-space:pre;color:#222;font-size:10.7px;line-height:14px;text-align:center;">16</div>
<div style="left:35px;top:466px;width:22px;white-space:pre;color:#222;font-size:10.7px;line-height:14px;text-align:center;">17</div>
<div style="left:35px;top:480px;width:22px;white-space:pre;color:#222;font-size:10.7px;line-height:14px;text-align:center;">18</div>
<div style="left:35px;top:494px;width:22px;white-space:pre;color:#222;font-size:10.7px;line-height:14px;text-align:center;">19</div>
<div style="left:35px;top:508px;width:22px;white-space:pre;color:#222;font-size:10.7px;line-height:14px;text-align:center;">20</div>
<div style="left:35px;top:522px;width:22px;white-space:pre;color:#222;font-size:10.7px;line-height:14px;text-align:center;">21</div>
<div style="left:35px;top:536px;width:22px;white-space:pre;color:#222;font-size:10.7px;line-height:14px;text-align:center;">22</div>
<div style="left:35px;top:550px;width:22px;white-space:pre;color:#222;font-size:10.7px;line-height:14px;text-align:center;">23</div>
<div style="left:35px;top:564px;width:22px;white-space:pre;color:#222;font-size:10.7px;line-height:14px;text-align:center;">24</div>
<div style="left:35px;top:578px;width:22px;white-space:pre;color:#222;font-size:10.7px;line-height:14px;text-align:center;">25</div>
<div style="left:35px;top:592px;width:22px;white-space:pre;color:#222;font-size:10.7px;line-height:14px;text-align:center;">26</div>
<div style="left:35px;top:606px;width:22px;white-space:pre;color:#222;font-size:10.7px;line-height:14px;text-align:center;">27</div>
<div style="left:35px;top:620px;width:22px;white-space:pre;color:#222;font-size:10.7px;line-height:14px;text-align:center;">28</div>
<div style="left:35px;top:634px;width:22px;white-space:pre;color:#222;font-size:10.7px;line-height:14px;text-align:center;">29</div>
<div style="left:35px;top:648px;width:22px;white-space:pre;color:#222;font-size:10.7px;line-height:14px;text-align:center;">30</div>
<div style="left:35px;top:662px;width:22px;white-space:pre;color:#222;font-size:10.7px;line-height:14px;text-align:center;">31</div>
<div style="left:35px;top:676px;width:22px;white-space:pre;color:#222;font-size:10.7px;line-height:14px;text-align:center;">32</div>
<div style="left:35px;top:690px;width:22px;white-space:pre;color:#222;font-size:10.7px;line-height:14px;text-align:center;">33</div>
<div style="left:35px;top:704px;width:22px;white-space:pre;color:#222;font-size:10.7px;line-height:14px;text-align:center;">34</div>
<div style="left:35px;top:718px;width:22px;white-space:pre;color:#222;font-size:10.7px;line-height:14px;text-align:center;">35</div>
<div style="left:35px;top:732px;width:22px;white-space:pre;color:#222;font-size:10.7px;line-height:14px;text-align:center;">36</div>
<div style="left:35px;top:746px;width:22px;white-space:pre;color:#222;font-size:10.7px;line-height:14px;text-align:center;">37</div>
<div style="left:35px;top:760px;width:22px;white-space:pre;color:#222;font-size:10.7px;line-height:14px;text-align:center;">38</div>
<div style="left:35px;top:774px;width:22px;white-space:pre;color:#222;font-size:10.7px;line-height:14px;text-align:center;">39</div>
<div style="left:35px;top:788px;width:22px;white-space:pre;color:#222;font-size:10.7px;line-height:14px;text-align:center;">40</div>
<div style="left:35px;top:802px;width:22px;white-space:pre;color:#222;font-size:10.7px;line-height:14px;text-align:center;">41</div>
<div style="left:35px;top:816px;width:22px;white-space:pre;color:#222;font-size:10.7px;line-height:14px;text-align:center;">42</div>
<div style="left:35px;top:830px;width:22px;white-space:pre;color:#222;font-size:10.7px;line-height:14px;text-align:center;">43</div>
<div style="left:35px;top:844px;width:22px;white-space:pre;color:#222;font-size:10.7px;line-height:14px;text-align:center;">44</div>
<div style="left:35px;top:858px;width:22px;white-space:pre;color:#222;font-size:10.7px;line-height:14px;text-align:center;">45</div>
<div style="left:35px;top:872px;width:22px;white-space:pre;color:#222;font-size:10.7px;line-height:14px;text-align:center;">46</div>
<div style="left:35px;top:886px;width:22px;white-space:pre;color:#222;font-size:10.7px;line-height:14px;text-align:center;">47</div>
<div style="left:35px;top:900px;width:22px;white-space:pre;color:#222;font-size:10.7px;line-height:14px;text-align:center;">48</div>
<div style="left:35px;top:914px;width:22px;white-space:pre;color:#222;font-size:10.7px;line-height:14px;text-align:center;">49</div>
<div style="left:35px;top:928px;width:22px;white-space:pre;color:#222;font-size:10.7px;line-height:14px;text-align:center;">50</div>
<div style="left:35px;top:942px;width:22px;white-space:pre;color:#222;font-size:10.7px;line-height:14px;text-align:center;">51</div>
<div style="left:35px;top:956px;width:22px;white-space:pre;color:#222;font-size:10.7px;line-height:14px;text-align:center;">52</div>
<div style="left:35px;top:970px;width:22px;white-space:pre;color:#222;font-size:10.7px;line-height:14px;text-align:center;">53</div>
<div style="left:35px;top:984px;width:22px;white-space:pre;color:#222;font-size:10.7px;line-height:14px;text-align:center;">54</div>
<div style="left:58px;top:243px;width:1461px;height:42px;background:#a1abd0"></div>
<div style="left:58px;top:284px;width:1461px;height:15px;background:#1681ab"></div>
<div style="left:407px;top:327px;width:78px;height:56px;background:#d9d9d9"></div>
<div style="left:485px;top:327px;width:248px;height:56px;background:#f2f2f2"></div>
<div style="left:72px;top:396px;width:1281px;height:15px;background:#1681ab"></div>
<div style="left:72px;top:480px;width:1281px;height:15px;background:#1681ab"></div>
<div style="left:72px;top:508px;width:1281px;height:15px;background:#d9d9d9"></div>
<div style="left:72px;top:956px;width:1281px;height:15px;background:#d9d9d9"></div>
<div style="left:60px;top:242px;white-space:pre;font-weight:bold;font-size:10.5px;line-height:14px;color:#000;letter-spacing:-0.062px;">Financial Model Build-Up</div>
<div style="left:337px;top:312px;width:70px;white-space:pre;font-weight:bold;font-size:10.5px;color:#000;line-height:14px;text-align:center;letter-spacing:0.459px;text-indent:0.459px;">Unit</div>
<div style="left:485px;top:312px;width:248px;white-space:pre;font-weight:bold;font-size:10.5px;line-height:14px;text-align:center;letter-spacing:-0.170px;text-indent:-0.170px;">Historicals</div>
<div style="left:733px;top:312px;width:620px;white-space:pre;font-weight:bold;font-size:10.5px;line-height:14px;text-align:center;letter-spacing:-0.169px;text-indent:-0.169px;">Forecast</div>
<div style="left:75px;top:325px;width:190px;height:1px;background:#000"></div>
<div style="left:270px;top:325px;width:65px;height:1px;background:#000"></div>
<div style="left:340px;top:325px;width:65px;height:1px;background:#000"></div>
<div style="left:410px;top:325px;width:73px;height:1px;background:#000"></div>
<div style="left:488px;top:325px;width:243px;height:1px;background:#000"></div>
<div style="left:736px;top:325px;width:615px;height:1px;background:#000"></div>
<div style="left:207px;top:326px;width:276px;white-space:pre;font-weight:bold;font-size:10.5px;color:#000;line-height:14px;text-align:right;letter-spacing:-0.500px;margin-right:0.500px;">BoP</div>
<div style="left:207px;top:340px;width:276px;white-space:pre;font-weight:bold;font-size:10.5px;color:#000;line-height:14px;text-align:right;letter-spacing:-0.711px;margin-right:0.711px;">EoP</div>
<div style="left:207px;top:354px;width:276px;white-space:pre;font-weight:bold;font-size:10.5px;color:#000;line-height:14px;text-align:right;letter-spacing:0.399px;margin-right:-0.399px;">Year</div>
<div style="left:207px;top:368px;width:276px;white-space:pre;font-weight:bold;font-size:10.5px;color:#000;line-height:14px;text-align:right;letter-spacing:0.297px;margin-right:-0.297px;">Days</div>
<div style="left:485px;top:326px;width:62px;white-space:pre;font-size:10.7px;color:#0000ff;line-height:14px;text-align:center;letter-spacing:0.916px;text-indent:0.916px;">1/1/20</div>
<div style="left:485px;top:340px;width:62px;white-space:pre;font-size:10.7px;color:#000;line-height:14px;text-align:center;letter-spacing:0.742px;text-indent:0.742px;">31/12/20</div>
<div style="left:485px;top:354px;width:62px;white-space:pre;font-size:10.7px;color:#000;line-height:14px;text-align:center;letter-spacing:0.206px;text-indent:0.206px;">2020</div>
<div style="left:485px;top:368px;width:62px;white-space:pre;font-size:10.7px;color:#000;line-height:14px;text-align:center;letter-spacing:0.328px;text-indent:0.328px;">366</div>
<div style="left:547px;top:326px;width:62px;white-space:pre;font-size:10.7px;color:#000;line-height:14px;text-align:center;letter-spacing:0.916px;text-indent:0.916px;">1/1/21</div>
<div style="left:547px;top:340px;width:62px;white-space:pre;font-size:10.7px;color:#000;line-height:14px;text-align:center;letter-spacing:0.742px;text-indent:0.742px;">31/12/21</div>
<div style="left:547px;top:354px;width:62px;white-space:pre;font-size:10.7px;color:#000;line-height:14px;text-align:center;letter-spacing:0.206px;text-indent:0.206px;">2021</div>
<div style="left:547px;top:368px;width:62px;white-space:pre;font-size:10.7px;color:#000;line-height:14px;text-align:center;letter-spacing:0.328px;text-indent:0.328px;">365</div>
<div style="left:609px;top:326px;width:62px;white-space:pre;font-size:10.7px;color:#000;line-height:14px;text-align:center;letter-spacing:0.916px;text-indent:0.916px;">1/1/22</div>
<div style="left:609px;top:340px;width:62px;white-space:pre;font-size:10.7px;color:#000;line-height:14px;text-align:center;letter-spacing:0.742px;text-indent:0.742px;">31/12/22</div>
<div style="left:609px;top:354px;width:62px;white-space:pre;font-size:10.7px;color:#000;line-height:14px;text-align:center;letter-spacing:0.206px;text-indent:0.206px;">2022</div>
<div style="left:609px;top:368px;width:62px;white-space:pre;font-size:10.7px;color:#000;line-height:14px;text-align:center;letter-spacing:0.328px;text-indent:0.328px;">365</div>
<div style="left:671px;top:326px;width:62px;white-space:pre;font-size:10.7px;color:#000;line-height:14px;text-align:center;letter-spacing:0.916px;text-indent:0.916px;">1/1/23</div>
<div style="left:671px;top:340px;width:62px;white-space:pre;font-size:10.7px;color:#000;line-height:14px;text-align:center;letter-spacing:0.742px;text-indent:0.742px;">31/12/23</div>
<div style="left:671px;top:354px;width:62px;white-space:pre;font-size:10.7px;color:#000;line-height:14px;text-align:center;letter-spacing:0.206px;text-indent:0.206px;">2023</div>
<div style="left:671px;top:368px;width:62px;white-space:pre;font-size:10.7px;color:#000;line-height:14px;text-align:center;letter-spacing:0.328px;text-indent:0.328px;">365</div>
<div style="left:733px;top:326px;width:62px;white-space:pre;font-size:10.7px;color:#000;line-height:14px;text-align:center;letter-spacing:0.916px;text-indent:0.916px;">1/1/24</div>
<div style="left:733px;top:340px;width:62px;white-space:pre;font-size:10.7px;color:#000;line-height:14px;text-align:center;letter-spacing:0.742px;text-indent:0.742px;">31/12/24</div>
<div style="left:733px;top:354px;width:62px;white-space:pre;font-size:10.7px;color:#000;line-height:14px;text-align:center;letter-spacing:0.206px;text-indent:0.206px;">2024</div>
<div style="left:733px;top:368px;width:62px;white-space:pre;font-size:10.7px;color:#000;line-height:14px;text-align:center;letter-spacing:0.328px;text-indent:0.328px;">366</div>
<div style="left:795px;top:326px;width:62px;white-space:pre;font-size:10.7px;color:#000;line-height:14px;text-align:center;letter-spacing:0.916px;text-indent:0.916px;">1/1/25</div>
<div style="left:795px;top:340px;width:62px;white-space:pre;font-size:10.7px;color:#000;line-height:14px;text-align:center;letter-spacing:0.742px;text-indent:0.742px;">31/12/25</div>
<div style="left:795px;top:354px;width:62px;white-space:pre;font-size:10.7px;color:#000;line-height:14px;text-align:center;letter-spacing:0.206px;text-indent:0.206px;">2025</div>
<div style="left:795px;top:368px;width:62px;white-space:pre;font-size:10.7px;color:#000;line-height:14px;text-align:center;letter-spacing:0.328px;text-indent:0.328px;">365</div>
<div style="left:857px;top:326px;width:62px;white-space:pre;font-size:10.7px;color:#000;line-height:14px;text-align:center;letter-spacing:0.916px;text-indent:0.916px;">1/1/26</div>
<div style="left:857px;top:340px;width:62px;white-space:pre;font-size:10.7px;color:#000;line-height:14px;text-align:center;letter-spacing:0.742px;text-indent:0.742px;">31/12/26</div>
<div style="left:857px;top:354px;width:62px;white-space:pre;font-size:10.7px;color:#000;line-height:14px;text-align:center;letter-spacing:0.206px;text-indent:0.206px;">2026</div>
<div style="left:857px;top:368px;width:62px;white-space:pre;font-size:10.7px;color:#000;line-height:14px;text-align:center;letter-spacing:0.328px;text-indent:0.328px;">365</div>
<div style="left:919px;top:326px;width:62px;white-space:pre;font-size:10.7px;color:#000;line-height:14px;text-align:center;letter-spacing:0.916px;text-indent:0.916px;">1/1/27</div>
<div style="left:919px;top:340px;width:62px;white-space:pre;font-size:10.7px;color:#000;line-height:14px;text-align:center;letter-spacing:0.742px;text-indent:0.742px;">31/12/27</div>
<div style="left:919px;top:354px;width:62px;white-space:pre;font-size:10.7px;color:#000;line-height:14px;text-align:center;letter-spacing:0.206px;text-indent:0.206px;">2027</div>
<div style="left:919px;top:368px;width:62px;white-space:pre;font-size:10.7px;color:#000;line-height:14px;text-align:center;letter-spacing:0.328px;text-indent:0.328px;">365</div>
<div style="left:981px;top:326px;width:62px;white-space:pre;font-size:10.7px;color:#000;line-height:14px;text-align:center;letter-spacing:0.916px;text-indent:0.916px;">1/1/28</div>
<div style="left:981px;top:340px;width:62px;white-space:pre;font-size:10.7px;color:#000;line-height:14px;text-align:center;letter-spacing:0.742px;text-indent:0.742px;">31/12/28</div>
<div style="left:981px;top:354px;width:62px;white-space:pre;font-size:10.7px;color:#000;line-height:14px;text-align:center;letter-spacing:0.206px;text-indent:0.206px;">2028</div>
<div style="left:981px;top:368px;width:62px;white-space:pre;font-size:10.7px;color:#000;line-height:14px;text-align:center;letter-spacing:0.328px;text-indent:0.328px;">366</div>
<div style="left:1043px;top:326px;width:62px;white-space:pre;font-size:10.7px;color:#000;line-height:14px;text-align:center;letter-spacing:0.916px;text-indent:0.916px;">1/1/29</div>
<div style="left:1043px;top:340px;width:62px;white-space:pre;font-size:10.7px;color:#000;line-height:14px;text-align:center;letter-spacing:0.742px;text-indent:0.742px;">31/12/29</div>
<div style="left:1043px;top:354px;width:62px;white-space:pre;font-size:10.7px;color:#000;line-height:14px;text-align:center;letter-spacing:0.206px;text-indent:0.206px;">2029</div>
<div style="left:1043px;top:368px;width:62px;white-space:pre;font-size:10.7px;color:#000;line-height:14px;text-align:center;letter-spacing:0.328px;text-indent:0.328px;">365</div>
<div style="left:1105px;top:326px;width:62px;white-space:pre;font-size:10.7px;color:#000;line-height:14px;text-align:center;letter-spacing:0.916px;text-indent:0.916px;">1/1/30</div>
<div style="left:1105px;top:340px;width:62px;white-space:pre;font-size:10.7px;color:#000;line-height:14px;text-align:center;letter-spacing:0.742px;text-indent:0.742px;">31/12/30</div>
<div style="left:1105px;top:354px;width:62px;white-space:pre;font-size:10.7px;color:#000;line-height:14px;text-align:center;letter-spacing:0.206px;text-indent:0.206px;">2030</div>
<div style="left:1105px;top:368px;width:62px;white-space:pre;font-size:10.7px;color:#000;line-height:14px;text-align:center;letter-spacing:0.328px;text-indent:0.328px;">365</div>
<div style="left:1167px;top:326px;width:62px;white-space:pre;font-size:10.7px;color:#000;line-height:14px;text-align:center;letter-spacing:0.916px;text-indent:0.916px;">1/1/31</div>
<div style="left:1167px;top:340px;width:62px;white-space:pre;font-size:10.7px;color:#000;line-height:14px;text-align:center;letter-spacing:0.742px;text-indent:0.742px;">31/12/31</div>
<div style="left:1167px;top:354px;width:62px;white-space:pre;font-size:10.7px;color:#000;line-height:14px;text-align:center;letter-spacing:0.206px;text-indent:0.206px;">2031</div>
<div style="left:1167px;top:368px;width:62px;white-space:pre;font-size:10.7px;color:#000;line-height:14px;text-align:center;letter-spacing:0.328px;text-indent:0.328px;">365</div>
<div style="left:1229px;top:326px;width:62px;white-space:pre;font-size:10.7px;color:#000;line-height:14px;text-align:center;letter-spacing:0.916px;text-indent:0.916px;">1/1/32</div>
<div style="left:1229px;top:340px;width:62px;white-space:pre;font-size:10.7px;color:#000;line-height:14px;text-align:center;letter-spacing:0.742px;text-indent:0.742px;">31/12/32</div>
<div style="left:1229px;top:354px;width:62px;white-space:pre;font-size:10.7px;color:#000;line-height:14px;text-align:center;letter-spacing:0.206px;text-indent:0.206px;">2032</div>
<div style="left:1229px;top:368px;width:62px;white-space:pre;font-size:10.7px;color:#000;line-height:14px;text-align:center;letter-spacing:0.328px;text-indent:0.328px;">366</div>
<div style="left:1291px;top:326px;width:62px;white-space:pre;font-size:10.7px;color:#000;line-height:14px;text-align:center;letter-spacing:0.916px;text-indent:0.916px;">1/1/33</div>
<div style="left:1291px;top:340px;width:62px;white-space:pre;font-size:10.7px;color:#000;line-height:14px;text-align:center;letter-spacing:0.742px;text-indent:0.742px;">31/12/33</div>
<div style="left:1291px;top:354px;width:62px;white-space:pre;font-size:10.7px;color:#000;line-height:14px;text-align:center;letter-spacing:0.206px;text-indent:0.206px;">2033</div>
<div style="left:1291px;top:368px;width:62px;white-space:pre;font-size:10.7px;color:#000;line-height:14px;text-align:center;letter-spacing:0.328px;text-indent:0.328px;">365</div>
<div style="left:61px;top:396px;white-space:pre;font-size:10.7px;font-size:10.7px;color:#000;line-height:14px;">X</div>
<div style="left:75px;top:396px;white-space:pre;font-weight:bold;font-size:10.5px;line-height:14px;color:#fff;letter-spacing:-0.252px;">Assumptions</div>
<div style="left:75px;top:410px;white-space:pre;font-size:10.7px;color:#000;line-height:14px;letter-spacing:0.409px;">Exchange Rate</div>
<div style="left:337px;top:410px;width:70px;white-space:pre;font-size:10.7px;color:#000;line-height:14px;text-align:center;letter-spacing:-0.672px;text-indent:-0.672px;">FX</div>
<div style="left:75px;top:424px;white-space:pre;font-size:10.7px;color:#000;line-height:14px;letter-spacing:0.995px;">Raw Materials Inflation</div>
<div style="left:337px;top:424px;width:70px;white-space:pre;font-size:10.7px;color:#000;line-height:14px;text-align:center;letter-spacing:0.539px;text-indent:0.539px;">Var. %</div>
<div style="left:75px;top:438px;white-space:pre;font-size:10.7px;color:#000;line-height:14px;letter-spacing:0.732px;">CPI Inflation</div>
<div style="left:337px;top:438px;width:70px;white-space:pre;font-size:10.7px;color:#000;line-height:14px;text-align:center;letter-spacing:0.539px;text-indent:0.539px;">Var. %</div>
<div style="left:75px;top:452px;white-space:pre;font-size:10.7px;color:#000;line-height:14px;letter-spacing:0.560px;">Corporate Tax Rate</div>
<div style="left:337px;top:452px;width:70px;white-space:pre;font-size:10.7px;color:#000;line-height:14px;text-align:center;letter-spacing:0.287px;text-indent:0.287px;">Rate %</div>
<div style="left:285px;top:410px;width:256px;white-space:pre;font-size:10.7px;color:#0000ff;line-height:14px;text-align:right;">1.0</div>
<div style="left:347px;top:410px;width:256px;white-space:pre;font-size:10.7px;color:#0000ff;line-height:14px;text-align:right;">1.0</div>
<div style="left:409px;top:410px;width:256px;white-space:pre;font-size:10.7px;color:#0000ff;line-height:14px;text-align:right;">1.0</div>
<div style="left:471px;top:410px;width:256px;white-space:pre;font-size:10.7px;color:#0000ff;line-height:14px;text-align:right;">1.0</div>
<div style="left:533px;top:410px;width:256px;white-space:pre;font-size:10.7px;color:#0000ff;line-height:14px;text-align:right;">1.0</div>
<div style="left:595px;top:410px;width:256px;white-space:pre;font-size:10.7px;color:#0000ff;line-height:14px;text-align:right;">1.0</div>
<div style="left:657px;top:410px;width:256px;white-space:pre;font-size:10.7px;color:#0000ff;line-height:14px;text-align:right;">1.0</div>
<div style="left:719px;top:410px;width:256px;white-space:pre;font-size:10.7px;color:#0000ff;line-height:14px;text-align:right;">1.0</div>
<div style="left:781px;top:410px;width:256px;white-space:pre;font-size:10.7px;color:#0000ff;line-height:14px;text-align:right;">1.0</div>
<div style="left:843px;top:410px;width:256px;white-space:pre;font-size:10.7px;color:#0000ff;line-height:14px;text-align:right;">1.0</div>
<div style="left:905px;top:410px;width:256px;white-space:pre;font-size:10.7px;color:#0000ff;line-height:14px;text-align:right;">1.0</div>
<div style="left:967px;top:410px;width:256px;white-space:pre;font-size:10.7px;color:#0000ff;line-height:14px;text-align:right;">1.0</div>
<div style="left:1029px;top:410px;width:256px;white-space:pre;font-size:10.7px;color:#0000ff;line-height:14px;text-align:right;">1.0</div>
<div style="left:1091px;top:410px;width:256px;white-space:pre;font-size:10.7px;color:#0000ff;line-height:14px;text-align:right;">1.0</div>
<div style="left:285px;top:424px;width:259px;white-space:pre;font-size:10.7px;color:#0000ff;line-height:14px;text-align:right;">3.6%</div>
<div style="left:347px;top:424px;width:259px;white-space:pre;font-size:10.7px;color:#0000ff;line-height:14px;text-align:right;">3.4%</div>
<div style="left:409px;top:424px;width:259px;white-space:pre;font-size:10.7px;color:#0000ff;line-height:14px;text-align:right;">5.7%</div>
<div style="left:471px;top:424px;width:259px;white-space:pre;font-size:10.7px;color:#0000ff;line-height:14px;text-align:right;">7.9%</div>
<div style="left:533px;top:424px;width:259px;white-space:pre;font-size:10.7px;color:#0000ff;line-height:14px;text-align:right;">5.9%</div>
<div style="left:595px;top:424px;width:259px;white-space:pre;font-size:10.7px;color:#0000ff;line-height:14px;text-align:right;">4.0%</div>
<div style="left:657px;top:424px;width:259px;white-space:pre;font-size:10.7px;color:#0000ff;line-height:14px;text-align:right;">3.7%</div>
<div style="left:719px;top:424px;width:259px;white-space:pre;font-size:10.7px;color:#0000ff;line-height:14px;text-align:right;">3.6%</div>
<div style="left:781px;top:424px;width:259px;white-space:pre;font-size:10.7px;color:#0000ff;line-height:14px;text-align:right;">3.4%</div>
<div style="left:843px;top:424px;width:259px;white-space:pre;font-size:10.7px;color:#0000ff;line-height:14px;text-align:right;">2.9%</div>
<div style="left:905px;top:424px;width:259px;white-space:pre;font-size:10.7px;color:#0000ff;line-height:14px;text-align:right;">2.7%</div>
<div style="left:967px;top:424px;width:259px;white-space:pre;font-size:10.7px;color:#0000ff;line-height:14px;text-align:right;">2.5%</div>
<div style="left:1029px;top:424px;width:259px;white-space:pre;font-size:10.7px;color:#0000ff;line-height:14px;text-align:right;">2.7%</div>
<div style="left:1091px;top:424px;width:259px;white-space:pre;font-size:10.7px;color:#0000ff;line-height:14px;text-align:right;">2.7%</div>
<div style="left:285px;top:438px;width:259px;white-space:pre;font-size:10.7px;color:#0000ff;line-height:14px;text-align:right;">1.8%</div>
<div style="left:347px;top:438px;width:259px;white-space:pre;font-size:10.7px;color:#0000ff;line-height:14px;text-align:right;">1.3%</div>
<div style="left:409px;top:438px;width:259px;white-space:pre;font-size:10.7px;color:#0000ff;line-height:14px;text-align:right;">4.7%</div>
<div style="left:471px;top:438px;width:259px;white-space:pre;font-size:10.7px;color:#0000ff;line-height:14px;text-align:right;">8.0%</div>
<div style="left:533px;top:438px;width:259px;white-space:pre;font-size:10.7px;color:#0000ff;line-height:14px;text-align:right;">4.2%</div>
<div style="left:595px;top:438px;width:259px;white-space:pre;font-size:10.7px;color:#0000ff;line-height:14px;text-align:right;">2.2%</div>
<div style="left:657px;top:438px;width:259px;white-space:pre;font-size:10.7px;color:#0000ff;line-height:14px;text-align:right;">1.9%</div>
<div style="left:719px;top:438px;width:259px;white-space:pre;font-size:10.7px;color:#0000ff;line-height:14px;text-align:right;">2.0%</div>
<div style="left:781px;top:438px;width:259px;white-space:pre;font-size:10.7px;color:#0000ff;line-height:14px;text-align:right;">2.1%</div>
<div style="left:843px;top:438px;width:259px;white-space:pre;font-size:10.7px;color:#0000ff;line-height:14px;text-align:right;">2.1%</div>
<div style="left:905px;top:438px;width:259px;white-space:pre;font-size:10.7px;color:#0000ff;line-height:14px;text-align:right;">2.1%</div>
<div style="left:967px;top:438px;width:259px;white-space:pre;font-size:10.7px;color:#0000ff;line-height:14px;text-align:right;">2.0%</div>
<div style="left:1029px;top:438px;width:259px;white-space:pre;font-size:10.7px;color:#0000ff;line-height:14px;text-align:right;">2.2%</div>
<div style="left:1091px;top:438px;width:259px;white-space:pre;font-size:10.7px;color:#0000ff;line-height:14px;text-align:right;">2.2%</div>
<div style="left:285px;top:452px;width:259px;white-space:pre;font-size:10.7px;color:#0000ff;line-height:14px;text-align:right;">30.0%</div>
<div style="left:347px;top:452px;width:259px;white-space:pre;font-size:10.7px;color:#0000ff;line-height:14px;text-align:right;">30.0%</div>
<div style="left:409px;top:452px;width:259px;white-space:pre;font-size:10.7px;color:#0000ff;line-height:14px;text-align:right;">30.0%</div>
<div style="left:471px;top:452px;width:259px;white-space:pre;font-size:10.7px;color:#0000ff;line-height:14px;text-align:right;">30.0%</div>
<div style="left:533px;top:452px;width:259px;white-space:pre;font-size:10.7px;color:#0000ff;line-height:14px;text-align:right;">30.0%</div>
<div style="left:595px;top:452px;width:259px;white-space:pre;font-size:10.7px;color:#0000ff;line-height:14px;text-align:right;">30.0%</div>
<div style="left:657px;top:452px;width:259px;white-space:pre;font-size:10.7px;color:#0000ff;line-height:14px;text-align:right;">30.0%</div>
<div style="left:719px;top:452px;width:259px;white-space:pre;font-size:10.7px;color:#0000ff;line-height:14px;text-align:right;">30.0%</div>
<div style="left:781px;top:452px;width:259px;white-space:pre;font-size:10.7px;color:#0000ff;line-height:14px;text-align:right;">30.0%</div>
<div style="left:843px;top:452px;width:259px;white-space:pre;font-size:10.7px;color:#0000ff;line-height:14px;text-align:right;">30.0%</div>
<div style="left:905px;top:452px;width:259px;white-space:pre;font-size:10.7px;color:#0000ff;line-height:14px;text-align:right;">30.0%</div>
<div style="left:967px;top:452px;width:259px;white-space:pre;font-size:10.7px;color:#0000ff;line-height:14px;text-align:right;">30.0%</div>
<div style="left:1029px;top:452px;width:259px;white-space:pre;font-size:10.7px;color:#0000ff;line-height:14px;text-align:right;">30.0%</div>
<div style="left:1091px;top:452px;width:259px;white-space:pre;font-size:10.7px;color:#0000ff;line-height:14px;text-align:right;">30.0%</div>
<div style="left:61px;top:480px;white-space:pre;font-size:10.7px;font-size:10.7px;color:#000;line-height:14px;">x</div>
<div style="left:75px;top:480px;white-space:pre;font-weight:bold;font-size:10.5px;line-height:14px;color:#fff;letter-spacing:-0.134px;">P&amp;L Build-Up</div>
<div style="left:61px;top:508px;white-space:pre;font-size:10.7px;font-size:10.7px;color:#000;line-height:14px;">x</div>
<div style="left:75px;top:508px;white-space:pre;font-weight:bold;font-size:10.5px;line-height:14px;color:#000;letter-spacing:-0.205px;">Product 1</div>
<div style="left:85px;top:522px;white-space:pre;font-weight:bold;font-size:10.5px;color:#000;line-height:14px;letter-spacing:0.249px;">Volume</div>
<div style="left:337px;top:522px;width:70px;white-space:pre;font-weight:bold;font-size:10.5px;color:#000;line-height:14px;text-align:center;letter-spacing:-0.073px;text-indent:-0.073px;">000s units</div>
<div style="left:407px;top:522px;width:78px;white-space:pre;font-weight:bold;font-size:10.5px;color:#000;line-height:14px;text-align:center;letter-spacing:-0.364px;text-indent:-0.364px;">YoY Change</div>
<div style="left:410px;top:536px;width:73px;height:1px;background:#000"></div>
<div style="left:409px;top:522px;width:256px;white-space:pre;font-weight:bold;font-size:10.5px;color:#000;line-height:14px;text-align:right;">274.0</div>
<div style="left:471px;top:522px;width:256px;white-space:pre;font-weight:bold;font-size:10.5px;color:#000;line-height:14px;text-align:right;">287.1</div>
<div style="left:533px;top:522px;width:256px;white-space:pre;font-size:10.7px;color:#000;line-height:14px;text-align:right;">315.8</div>
<div style="left:595px;top:522px;width:256px;white-space:pre;font-size:10.7px;color:#000;line-height:14px;text-align:right;">347.4</div>
<div style="left:657px;top:522px;width:256px;white-space:pre;font-size:10.7px;color:#000;line-height:14px;text-align:right;">382.1</div>
<div style="left:719px;top:522px;width:256px;white-space:pre;font-size:10.7px;color:#000;line-height:14px;text-align:right;">420.3</div>
<div style="left:781px;top:522px;width:256px;white-space:pre;font-size:10.7px;color:#000;line-height:14px;text-align:right;">462.4</div>
<div style="left:843px;top:522px;width:256px;white-space:pre;font-size:10.7px;color:#000;line-height:14px;text-align:right;">508.6</div>
<div style="left:905px;top:522px;width:256px;white-space:pre;font-size:10.7px;color:#000;line-height:14px;text-align:right;">559.4</div>
<div style="left:967px;top:522px;width:256px;white-space:pre;font-size:10.7px;color:#000;line-height:14px;text-align:right;">615.4</div>
<div style="left:1029px;top:522px;width:256px;white-space:pre;font-size:10.7px;color:#000;line-height:14px;text-align:right;">676.9</div>
<div style="left:1091px;top:522px;width:256px;white-space:pre;font-size:10.7px;color:#000;line-height:14px;text-align:right;">744.6</div>
<div style="left:95px;top:537px;white-space:pre;font-style:italic;font-size:10.4px;color:#000;line-height:14px;letter-spacing:0.800px;">Growth</div>
<div style="left:337px;top:537px;width:70px;white-space:pre;font-style:italic;font-size:10.4px;color:#000;line-height:14px;text-align:center;letter-spacing:0.276px;text-indent:0.276px;">Var. %</div>
<div style="left:407px;top:537px;width:78px;height:14px;background:#ffffcc;border:1px dotted #000;border-right:none;box-sizing:border-box"></div>
<div style="left:407px;top:536px;width:78px;white-space:pre;font-size:10.7px;color:#0000ff;line-height:14px;text-align:center;letter-spacing:0.047px;text-indent:0.047px;">10.0%</div>
<div style="left:471px;top:537px;width:257px;white-space:pre;font-style:italic;font-size:10.4px;color:#000;line-height:14px;text-align:right;">4.8%</div>
<div style="left:533px;top:537px;width:257px;white-space:pre;font-style:italic;font-size:10.4px;color:#000;line-height:14px;text-align:right;">10.0%</div>
<div style="left:595px;top:537px;width:257px;white-space:pre;font-style:italic;font-size:10.4px;color:#000;line-height:14px;text-align:right;">10.0%</div>
<div style="left:657px;top:537px;width:257px;white-space:pre;font-style:italic;font-size:10.4px;color:#000;line-height:14px;text-align:right;">10.0%</div>
<div style="left:719px;top:537px;width:257px;white-space:pre;font-style:italic;font-size:10.4px;color:#000;line-height:14px;text-align:right;">10.0%</div>
<div style="left:781px;top:537px;width:257px;white-space:pre;font-style:italic;font-size:10.4px;color:#000;line-height:14px;text-align:right;">10.0%</div>
<div style="left:843px;top:537px;width:257px;white-space:pre;font-style:italic;font-size:10.4px;color:#000;line-height:14px;text-align:right;">10.0%</div>
<div style="left:905px;top:537px;width:257px;white-space:pre;font-style:italic;font-size:10.4px;color:#000;line-height:14px;text-align:right;">10.0%</div>
<div style="left:967px;top:537px;width:257px;white-space:pre;font-style:italic;font-size:10.4px;color:#000;line-height:14px;text-align:right;">10.0%</div>
<div style="left:1029px;top:537px;width:257px;white-space:pre;font-style:italic;font-size:10.4px;color:#000;line-height:14px;text-align:right;">10.0%</div>
<div style="left:1091px;top:537px;width:257px;white-space:pre;font-style:italic;font-size:10.4px;color:#000;line-height:14px;text-align:right;">10.0%</div>
<div style="left:75px;top:564px;white-space:pre;font-size:10.7px;color:#000;line-height:14px;letter-spacing:0.404px;">Product Price</div>
<div style="left:337px;top:564px;width:70px;white-space:pre;font-size:10.7px;color:#000;line-height:14px;text-align:center;">$</div>
<div style="left:407px;top:564px;width:78px;white-space:pre;font-weight:bold;font-size:10.5px;color:#000;line-height:14px;text-align:center;letter-spacing:-0.014px;text-indent:-0.014px;">Price Growth</div>
<div style="left:410px;top:578px;width:73px;height:1px;background:#000"></div>
<div style="left:409px;top:564px;width:259px;white-space:pre;font-size:10.7px;color:#0000ff;line-height:14px;text-align:right;">22.3</div>
<div style="left:471px;top:564px;width:259px;white-space:pre;font-size:10.7px;color:#0000ff;line-height:14px;text-align:right;">25.0</div>
<div style="left:533px;top:564px;width:256px;white-space:pre;font-size:10.7px;color:#000;line-height:14px;text-align:right;">26.0</div>
<div style="left:595px;top:564px;width:256px;white-space:pre;font-size:10.7px;color:#000;line-height:14px;text-align:right;">27.1</div>
<div style="left:657px;top:564px;width:256px;white-space:pre;font-size:10.7px;color:#000;line-height:14px;text-align:right;">28.1</div>
<div style="left:719px;top:564px;width:256px;white-space:pre;font-size:10.7px;color:#000;line-height:14px;text-align:right;">29.3</div>
<div style="left:781px;top:564px;width:256px;white-space:pre;font-size:10.7px;color:#000;line-height:14px;text-align:right;">30.4</div>
<div style="left:843px;top:564px;width:256px;white-space:pre;font-size:10.7px;color:#000;line-height:14px;text-align:right;">31.6</div>
<div style="left:905px;top:564px;width:256px;white-space:pre;font-size:10.7px;color:#000;line-height:14px;text-align:right;">32.9</div>
<div style="left:967px;top:564px;width:256px;white-space:pre;font-size:10.7px;color:#000;line-height:14px;text-align:right;">34.2</div>
<div style="left:1029px;top:564px;width:256px;white-space:pre;font-size:10.7px;color:#000;line-height:14px;text-align:right;">35.6</div>
<div style="left:1091px;top:564px;width:256px;white-space:pre;font-size:10.7px;color:#000;line-height:14px;text-align:right;">37.0</div>
<div style="left:75px;top:579px;white-space:pre;font-style:italic;font-size:10.4px;color:#000;line-height:14px;letter-spacing:0.800px;">Growth</div>
<div style="left:337px;top:579px;width:70px;white-space:pre;font-style:italic;font-size:10.4px;color:#000;line-height:14px;text-align:center;letter-spacing:0.276px;text-indent:0.276px;">Var. %</div>
<div style="left:407px;top:579px;width:78px;height:14px;background:#ffffcc;border:1px dotted #000;border-right:none;box-sizing:border-box"></div>
<div style="left:407px;top:578px;width:78px;white-space:pre;font-size:10.7px;color:#0000ff;line-height:14px;text-align:center;letter-spacing:-0.125px;text-indent:-0.125px;">4.0%</div>
<div style="left:471px;top:579px;width:257px;white-space:pre;font-style:italic;font-size:10.4px;color:#000;line-height:14px;text-align:right;">12.1%</div>
<div style="left:533px;top:579px;width:257px;white-space:pre;font-style:italic;font-size:10.4px;color:#000;line-height:14px;text-align:right;">4.0%</div>
<div style="left:595px;top:579px;width:257px;white-space:pre;font-style:italic;font-size:10.4px;color:#000;line-height:14px;text-align:right;">4.0%</div>
<div style="left:657px;top:579px;width:257px;white-space:pre;font-style:italic;font-size:10.4px;color:#000;line-height:14px;text-align:right;">4.0%</div>
<div style="left:719px;top:579px;width:257px;white-space:pre;font-style:italic;font-size:10.4px;color:#000;line-height:14px;text-align:right;">4.0%</div>
<div style="left:781px;top:579px;width:257px;white-space:pre;font-style:italic;font-size:10.4px;color:#000;line-height:14px;text-align:right;">4.0%</div>
<div style="left:843px;top:579px;width:257px;white-space:pre;font-style:italic;font-size:10.4px;color:#000;line-height:14px;text-align:right;">4.0%</div>
<div style="left:905px;top:579px;width:257px;white-space:pre;font-style:italic;font-size:10.4px;color:#000;line-height:14px;text-align:right;">4.0%</div>
<div style="left:967px;top:579px;width:257px;white-space:pre;font-style:italic;font-size:10.4px;color:#000;line-height:14px;text-align:right;">4.0%</div>
<div style="left:1029px;top:579px;width:257px;white-space:pre;font-style:italic;font-size:10.4px;color:#000;line-height:14px;text-align:right;">4.0%</div>
<div style="left:1091px;top:579px;width:257px;white-space:pre;font-style:italic;font-size:10.4px;color:#000;line-height:14px;text-align:right;">4.0%</div>
<div style="left:72px;top:592px;width:1281px;height:1px;background-image:linear-gradient(90deg,#000 50%,transparent 50%);background-size:2px 1px"></div>
<div style="left:75px;top:592px;white-space:pre;font-weight:bold;font-size:10.5px;color:#000;line-height:14px;letter-spacing:-0.173px;">Revenues</div>
<div style="left:337px;top:592px;width:70px;white-space:pre;font-weight:bold;font-size:10.5px;color:#000;line-height:14px;text-align:center;letter-spacing:0.319px;text-indent:0.319px;">$000&#x27;s</div>
<div style="left:409px;top:592px;width:256px;white-space:pre;font-weight:bold;font-size:10.5px;color:#0000ff;line-height:14px;text-align:right;">6,112.0</div>
<div style="left:471px;top:592px;width:256px;white-space:pre;font-weight:bold;font-size:10.5px;color:#0000ff;line-height:14px;text-align:right;">7,180.0</div>
<div style="left:533px;top:592px;width:256px;white-space:pre;font-weight:bold;font-size:10.5px;color:#000;line-height:14px;text-align:right;">8,213.9</div>
<div style="left:595px;top:592px;width:256px;white-space:pre;font-weight:bold;font-size:10.5px;color:#000;line-height:14px;text-align:right;">9,396.7</div>
<div style="left:657px;top:592px;width:256px;white-space:pre;font-weight:bold;font-size:10.5px;color:#000;line-height:14px;text-align:right;">10,749.9</div>
<div style="left:719px;top:592px;width:256px;white-space:pre;font-weight:bold;font-size:10.5px;color:#000;line-height:14px;text-align:right;">12,297.8</div>
<div style="left:781px;top:592px;width:256px;white-space:pre;font-weight:bold;font-size:10.5px;color:#000;line-height:14px;text-align:right;">14,068.7</div>
<div style="left:843px;top:592px;width:256px;white-space:pre;font-weight:bold;font-size:10.5px;color:#000;line-height:14px;text-align:right;">16,094.6</div>
<div style="left:905px;top:592px;width:256px;white-space:pre;font-weight:bold;font-size:10.5px;color:#000;line-height:14px;text-align:right;">18,412.2</div>
<div style="left:967px;top:592px;width:256px;white-space:pre;font-weight:bold;font-size:10.5px;color:#000;line-height:14px;text-align:right;">21,063.6</div>
<div style="left:1029px;top:592px;width:256px;white-space:pre;font-weight:bold;font-size:10.5px;color:#000;line-height:14px;text-align:right;">24,096.8</div>
<div style="left:1091px;top:592px;width:256px;white-space:pre;font-weight:bold;font-size:10.5px;color:#000;line-height:14px;text-align:right;">27,566.7</div>
<div style="left:75px;top:607px;white-space:pre;font-style:italic;font-size:10.4px;color:#000;line-height:14px;letter-spacing:0.800px;">Growth</div>
<div style="left:337px;top:607px;width:70px;white-space:pre;font-style:italic;font-size:10.4px;color:#000;line-height:14px;text-align:center;letter-spacing:0.276px;text-indent:0.276px;">Var. %</div>
<div style="left:471px;top:607px;width:257px;white-space:pre;font-style:italic;font-size:10.4px;color:#000;line-height:14px;text-align:right;">17.5%</div>
<div style="left:533px;top:607px;width:257px;white-space:pre;font-style:italic;font-size:10.4px;color:#000;line-height:14px;text-align:right;">14.4%</div>
<div style="left:595px;top:607px;width:257px;white-space:pre;font-style:italic;font-size:10.4px;color:#000;line-height:14px;text-align:right;">14.4%</div>
<div style="left:657px;top:607px;width:257px;white-space:pre;font-style:italic;font-size:10.4px;color:#000;line-height:14px;text-align:right;">14.4%</div>
<div style="left:719px;top:607px;width:257px;white-space:pre;font-style:italic;font-size:10.4px;color:#000;line-height:14px;text-align:right;">14.4%</div>
<div style="left:781px;top:607px;width:257px;white-space:pre;font-style:italic;font-size:10.4px;color:#000;line-height:14px;text-align:right;">14.4%</div>
<div style="left:843px;top:607px;width:257px;white-space:pre;font-style:italic;font-size:10.4px;color:#000;line-height:14px;text-align:right;">14.4%</div>
<div style="left:905px;top:607px;width:257px;white-space:pre;font-style:italic;font-size:10.4px;color:#000;line-height:14px;text-align:right;">14.4%</div>
<div style="left:967px;top:607px;width:257px;white-space:pre;font-style:italic;font-size:10.4px;color:#000;line-height:14px;text-align:right;">14.4%</div>
<div style="left:1029px;top:607px;width:257px;white-space:pre;font-style:italic;font-size:10.4px;color:#000;line-height:14px;text-align:right;">14.4%</div>
<div style="left:1091px;top:607px;width:257px;white-space:pre;font-style:italic;font-size:10.4px;color:#000;line-height:14px;text-align:right;">14.4%</div>
<div style="left:75px;top:634px;white-space:pre;font-size:10.7px;color:#000;line-height:14px;letter-spacing:0.186px;">COGS (incl. D&amp;A)</div>
<div style="left:337px;top:634px;width:70px;white-space:pre;font-size:10.7px;color:#000;line-height:14px;text-align:center;letter-spacing:0.426px;text-indent:0.426px;">$000&#x27;s</div>
<div style="left:407px;top:634px;width:78px;white-space:pre;font-weight:bold;font-size:10.5px;color:#000;line-height:14px;text-align:center;letter-spacing:-0.034px;text-indent:-0.034px;">% of LoB D&amp;A</div>
<div style="left:410px;top:648px;width:73px;height:1px;background:#000"></div>
<div style="left:409px;top:634px;width:256px;white-space:pre;font-size:10.7px;color:#0000ff;line-height:14px;text-align:right;">4,406.0</div>
<div style="left:471px;top:634px;width:256px;white-space:pre;font-size:10.7px;color:#0000ff;line-height:14px;text-align:right;">5,752.0</div>
<div style="left:533px;top:634px;width:256px;white-space:pre;font-size:10.7px;color:#000;line-height:14px;text-align:right;">6,761.6</div>
<div style="left:595px;top:634px;width:256px;white-space:pre;font-size:10.7px;color:#000;line-height:14px;text-align:right;">7,727.5</div>
<div style="left:657px;top:634px;width:256px;white-space:pre;font-size:10.7px;color:#000;line-height:14px;text-align:right;">8,806.3</div>
<div style="left:719px;top:634px;width:256px;white-space:pre;font-size:10.7px;color:#000;line-height:14px;text-align:right;">10,025.1</div>
<div style="left:781px;top:634px;width:256px;white-space:pre;font-size:10.7px;color:#000;line-height:14px;text-align:right;">11,390.8</div>
<div style="left:843px;top:634px;width:256px;white-space:pre;font-size:10.7px;color:#000;line-height:14px;text-align:right;">12,884.4</div>
<div style="left:905px;top:634px;width:256px;white-space:pre;font-size:10.7px;color:#000;line-height:14px;text-align:right;">14,547.4</div>
<div style="left:967px;top:634px;width:256px;white-space:pre;font-size:10.7px;color:#000;line-height:14px;text-align:right;">15,886.4</div>
<div style="left:1029px;top:634px;width:256px;white-space:pre;font-size:10.7px;color:#000;line-height:14px;text-align:right;">17,906.3</div>
<div style="left:1091px;top:634px;width:256px;white-space:pre;font-size:10.7px;color:#000;line-height:14px;text-align:right;">20,187.0</div>
<div style="left:75px;top:648px;white-space:pre;font-size:10.7px;color:#000;line-height:14px;letter-spacing:0.138px;">D&amp;A in COGS</div>
<div style="left:337px;top:648px;width:70px;white-space:pre;font-size:10.7px;color:#000;line-height:14px;text-align:center;letter-spacing:0.426px;text-indent:0.426px;">$000&#x27;s</div>
<div style="left:407px;top:649px;width:78px;height:14px;background:#ffffcc;border:1px dotted #000;border-right:none;box-sizing:border-box"></div>
<div style="left:407px;top:648px;width:78px;white-space:pre;font-size:10.7px;color:#0000ff;line-height:14px;text-align:center;letter-spacing:0.047px;text-indent:0.047px;">60.0%</div>
<div style="left:409px;top:648px;width:259px;white-space:pre;font-size:10.7px;color:#000;line-height:14px;text-align:right;">(334.2)</div>
<div style="left:471px;top:648px;width:259px;white-space:pre;font-size:10.7px;color:#000;line-height:14px;text-align:right;">(360.0)</div>
<div style="left:533px;top:648px;width:259px;white-space:pre;font-size:10.7px;color:#000;line-height:14px;text-align:right;">(509.0)</div>
<div style="left:595px;top:648px;width:259px;white-space:pre;font-size:10.7px;color:#000;line-height:14px;text-align:right;">(604.3)</div>
<div style="left:657px;top:648px;width:259px;white-space:pre;font-size:10.7px;color:#000;line-height:14px;text-align:right;">(711.6)</div>
<div style="left:719px;top:648px;width:259px;white-space:pre;font-size:10.7px;color:#000;line-height:14px;text-align:right;">(832.2)</div>
<div style="left:781px;top:648px;width:259px;white-space:pre;font-size:10.7px;color:#000;line-height:14px;text-align:right;">(967.9)</div>
<div style="left:843px;top:648px;width:259px;white-space:pre;font-size:10.7px;color:#000;line-height:14px;text-align:right;">(1,120.6)</div>
<div style="left:905px;top:648px;width:259px;white-space:pre;font-size:10.7px;color:#000;line-height:14px;text-align:right;">(1,292.7)</div>
<div style="left:967px;top:648px;width:259px;white-space:pre;font-size:10.7px;color:#000;line-height:14px;text-align:right;">(977.4)</div>
<div style="left:1029px;top:648px;width:259px;white-space:pre;font-size:10.7px;color:#000;line-height:14px;text-align:right;">(1,100.3)</div>
<div style="left:1091px;top:648px;width:259px;white-space:pre;font-size:10.7px;color:#000;line-height:14px;text-align:right;">(1,238.9)</div>
<div style="left:75px;top:662px;white-space:pre;font-weight:bold;font-size:10.5px;color:#000;line-height:14px;letter-spacing:-0.057px;">COGS (excl. D&amp;A)</div>
<div style="left:337px;top:662px;width:70px;white-space:pre;font-size:10.7px;color:#000;line-height:14px;text-align:center;letter-spacing:0.426px;text-indent:0.426px;">$000&#x27;s</div>
<div style="left:409px;top:662px;width:256px;white-space:pre;font-weight:bold;font-size:10.5px;color:#000;line-height:14px;text-align:right;">4,071.8</div>
<div style="left:471px;top:662px;width:256px;white-space:pre;font-weight:bold;font-size:10.5px;color:#000;line-height:14px;text-align:right;">5,392.0</div>
<div style="left:533px;top:662px;width:256px;white-space:pre;font-weight:bold;font-size:10.5px;color:#000;line-height:14px;text-align:right;">6,252.6</div>
<div style="left:595px;top:662px;width:256px;white-space:pre;font-weight:bold;font-size:10.5px;color:#000;line-height:14px;text-align:right;">7,123.3</div>
<div style="left:657px;top:662px;width:256px;white-space:pre;font-weight:bold;font-size:10.5px;color:#000;line-height:14px;text-align:right;">8,094.7</div>
<div style="left:719px;top:662px;width:256px;white-space:pre;font-weight:bold;font-size:10.5px;color:#000;line-height:14px;text-align:right;">9,192.8</div>
<div style="left:781px;top:662px;width:256px;white-space:pre;font-weight:bold;font-size:10.5px;color:#000;line-height:14px;text-align:right;">10,423.0</div>
<div style="left:843px;top:662px;width:256px;white-space:pre;font-weight:bold;font-size:10.5px;color:#000;line-height:14px;text-align:right;">11,763.8</div>
<div style="left:905px;top:662px;width:256px;white-space:pre;font-weight:bold;font-size:10.5px;color:#000;line-height:14px;text-align:right;">13,254.7</div>
<div style="left:967px;top:662px;width:256px;white-space:pre;font-weight:bold;font-size:10.5px;color:#000;line-height:14px;text-align:right;">14,909.0</div>
<div style="left:1029px;top:662px;width:256px;white-space:pre;font-weight:bold;font-size:10.5px;color:#000;line-height:14px;text-align:right;">16,806.0</div>
<div style="left:1091px;top:662px;width:256px;white-space:pre;font-weight:bold;font-size:10.5px;color:#000;line-height:14px;text-align:right;">18,948.0</div>
<div style="left:72px;top:676px;width:1281px;height:1px;background-image:linear-gradient(90deg,#000 50%,transparent 50%);background-size:2px 1px"></div>
<div style="left:407px;top:676px;width:78px;white-space:pre;font-weight:bold;font-size:10.5px;color:#000;line-height:14px;text-align:center;letter-spacing:-0.156px;text-indent:-0.156px;">% Variab. COGS</div>
<div style="left:340px;top:690px;width:143px;height:1px;background:#000"></div>
<div style="left:75px;top:690px;white-space:pre;font-weight:bold;font-size:10.5px;color:#000;line-height:14px;letter-spacing:-0.014px;">Variable COGS (excl. D&amp;A)</div>
<div style="left:337px;top:690px;width:70px;white-space:pre;font-size:10.7px;color:#000;line-height:14px;text-align:center;letter-spacing:0.426px;text-indent:0.426px;">$000&#x27;s</div>
<div style="left:407px;top:691px;width:78px;height:14px;background:#ffffcc;border:1px dotted #000;border-right:none;box-sizing:border-box"></div>
<div style="left:407px;top:690px;width:78px;white-space:pre;font-size:10.7px;color:#0000ff;line-height:14px;text-align:center;letter-spacing:0.047px;text-indent:0.047px;">95.0%</div>
<div style="left:409px;top:690px;width:256px;white-space:pre;font-weight:bold;font-size:10.5px;color:#000;line-height:14px;text-align:right;">3,868.2</div>
<div style="left:471px;top:690px;width:256px;white-space:pre;font-weight:bold;font-size:10.5px;color:#000;line-height:14px;text-align:right;">5,122.4</div>
<div style="left:533px;top:690px;width:256px;white-space:pre;font-weight:bold;font-size:10.5px;color:#000;line-height:14px;text-align:right;">5,967.1</div>
<div style="left:595px;top:690px;width:256px;white-space:pre;font-weight:bold;font-size:10.5px;color:#000;line-height:14px;text-align:right;">6,826.3</div>
<div style="left:657px;top:690px;width:256px;white-space:pre;font-weight:bold;font-size:10.5px;color:#000;line-height:14px;text-align:right;">7,786.8</div>
<div style="left:719px;top:690px;width:256px;white-space:pre;font-weight:bold;font-size:10.5px;color:#000;line-height:14px;text-align:right;">8,873.8</div>
<div style="left:781px;top:690px;width:256px;white-space:pre;font-weight:bold;font-size:10.5px;color:#000;line-height:14px;text-align:right;">10,093.1</div>
<div style="left:843px;top:690px;width:256px;white-space:pre;font-weight:bold;font-size:10.5px;color:#000;line-height:14px;text-align:right;">11,424.4</div>
<div style="left:905px;top:690px;width:256px;white-space:pre;font-weight:bold;font-size:10.5px;color:#000;line-height:14px;text-align:right;">12,906.1</div>
<div style="left:967px;top:690px;width:256px;white-space:pre;font-weight:bold;font-size:10.5px;color:#000;line-height:14px;text-align:right;">14,551.7</div>
<div style="left:1029px;top:690px;width:256px;white-space:pre;font-weight:bold;font-size:10.5px;color:#000;line-height:14px;text-align:right;">16,439.0</div>
<div style="left:1091px;top:690px;width:256px;white-space:pre;font-weight:bold;font-size:10.5px;color:#000;line-height:14px;text-align:right;">18,571.2</div>
<div style="left:72px;top:704px;width:1281px;height:1px;background-image:linear-gradient(90deg,#000 50%,transparent 50%);background-size:2px 1px"></div>
<div style="left:75px;top:705px;white-space:pre;font-style:italic;font-size:10.4px;color:#000;line-height:14px;letter-spacing:0.123px;">Average COGS per unit</div>
<div style="left:337px;top:705px;width:70px;white-space:pre;font-style:italic;font-size:10.4px;color:#000;line-height:14px;text-align:center;">$</div>
<div style="left:407px;top:704px;width:78px;white-space:pre;font-weight:bold;font-size:10.5px;color:#000;line-height:14px;text-align:center;letter-spacing:-0.247px;text-indent:-0.247px;">% Fixed COGS</div>
<div style="left:410px;top:718px;width:73px;height:1px;background:#000"></div>
<div style="left:409px;top:705px;width:256px;white-space:pre;font-style:italic;font-size:10.4px;color:#000;line-height:14px;text-align:right;">14.1</div>
<div style="left:471px;top:705px;width:256px;white-space:pre;font-style:italic;font-size:10.4px;color:#000;line-height:14px;text-align:right;">17.8</div>
<div style="left:533px;top:705px;width:256px;white-space:pre;font-style:italic;font-size:10.4px;color:#000;line-height:14px;text-align:right;">18.9</div>
<div style="left:595px;top:705px;width:256px;white-space:pre;font-style:italic;font-size:10.4px;color:#000;line-height:14px;text-align:right;">19.7</div>
<div style="left:657px;top:705px;width:256px;white-space:pre;font-style:italic;font-size:10.4px;color:#000;line-height:14px;text-align:right;">20.4</div>
<div style="left:719px;top:705px;width:256px;white-space:pre;font-style:italic;font-size:10.4px;color:#000;line-height:14px;text-align:right;">21.1</div>
<div style="left:781px;top:705px;width:256px;white-space:pre;font-style:italic;font-size:10.4px;color:#000;line-height:14px;text-align:right;">21.8</div>
<div style="left:843px;top:705px;width:256px;white-space:pre;font-style:italic;font-size:10.4px;color:#000;line-height:14px;text-align:right;">22.5</div>
<div style="left:905px;top:705px;width:256px;white-space:pre;font-style:italic;font-size:10.4px;color:#000;line-height:14px;text-align:right;">23.1</div>
<div style="left:967px;top:705px;width:256px;white-space:pre;font-style:italic;font-size:10.4px;color:#000;line-height:14px;text-align:right;">23.6</div>
<div style="left:1029px;top:705px;width:256px;white-space:pre;font-style:italic;font-size:10.4px;color:#000;line-height:14px;text-align:right;">24.3</div>
<div style="left:1091px;top:705px;width:256px;white-space:pre;font-style:italic;font-size:10.4px;color:#000;line-height:14px;text-align:right;">24.9</div>
<div style="left:75px;top:718px;white-space:pre;font-weight:bold;font-size:10.5px;color:#000;line-height:14px;letter-spacing:-0.076px;">Fixed COGS (excl. D&amp;A)</div>
<div style="left:337px;top:718px;width:70px;white-space:pre;font-size:10.7px;color:#000;line-height:14px;text-align:center;letter-spacing:0.426px;text-indent:0.426px;">$000&#x27;s</div>
<div style="left:407px;top:719px;width:78px;height:14px;background:#fff;border:1px dotted #000;border-right:none;box-sizing:border-box"></div>
<div style="left:407px;top:718px;width:78px;white-space:pre;font-size:10.7px;color:#000;line-height:14px;text-align:center;letter-spacing:-0.125px;text-indent:-0.125px;">5.0%</div>
<div style="left:409px;top:718px;width:256px;white-space:pre;font-weight:bold;font-size:10.5px;color:#000;line-height:14px;text-align:right;">203.6</div>
<div style="left:471px;top:718px;width:256px;white-space:pre;font-weight:bold;font-size:10.5px;color:#000;line-height:14px;text-align:right;">269.6</div>
<div style="left:533px;top:718px;width:256px;white-space:pre;font-weight:bold;font-size:10.5px;color:#000;line-height:14px;text-align:right;">285.5</div>
<div style="left:595px;top:718px;width:256px;white-space:pre;font-weight:bold;font-size:10.5px;color:#000;line-height:14px;text-align:right;">296.9</div>
<div style="left:657px;top:718px;width:256px;white-space:pre;font-weight:bold;font-size:10.5px;color:#000;line-height:14px;text-align:right;">307.9</div>
<div style="left:719px;top:718px;width:256px;white-space:pre;font-weight:bold;font-size:10.5px;color:#000;line-height:14px;text-align:right;">319.0</div>
<div style="left:781px;top:718px;width:256px;white-space:pre;font-weight:bold;font-size:10.5px;color:#000;line-height:14px;text-align:right;">329.8</div>
<div style="left:843px;top:718px;width:256px;white-space:pre;font-weight:bold;font-size:10.5px;color:#000;line-height:14px;text-align:right;">339.4</div>
<div style="left:905px;top:718px;width:256px;white-space:pre;font-weight:bold;font-size:10.5px;color:#000;line-height:14px;text-align:right;">348.6</div>
<div style="left:967px;top:718px;width:256px;white-space:pre;font-weight:bold;font-size:10.5px;color:#000;line-height:14px;text-align:right;">357.3</div>
<div style="left:1029px;top:718px;width:256px;white-space:pre;font-weight:bold;font-size:10.5px;color:#000;line-height:14px;text-align:right;">366.9</div>
<div style="left:1091px;top:718px;width:256px;white-space:pre;font-weight:bold;font-size:10.5px;color:#000;line-height:14px;text-align:right;">376.8</div>
<div style="left:72px;top:732px;width:1281px;height:1px;background-image:linear-gradient(90deg,#000 50%,transparent 50%);background-size:2px 1px"></div>
<div style="left:75px;top:733px;white-space:pre;font-style:italic;font-size:10.4px;color:#000;line-height:14px;letter-spacing:0.800px;">Growth</div>
<div style="left:337px;top:733px;width:70px;white-space:pre;font-style:italic;font-size:10.4px;color:#000;line-height:14px;text-align:center;letter-spacing:0.276px;text-indent:0.276px;">Var. %</div>
<div style="left:733px;top:733px;width:62px;height:14px;background:#ffffcc;border:1px dotted #000;box-sizing:border-box"></div>
<div style="left:471px;top:733px;width:257px;white-space:pre;font-style:italic;font-size:10.4px;color:#000;line-height:14px;text-align:right;">32.4%</div>
<div style="left:533px;top:733px;width:257px;white-space:pre;font-style:italic;font-size:10.4px;color:#000;line-height:14px;text-align:right;">5.9%</div>
<div style="left:595px;top:733px;width:257px;white-space:pre;font-style:italic;font-size:10.4px;color:#000;line-height:14px;text-align:right;">4.0%</div>
<div style="left:657px;top:733px;width:257px;white-space:pre;font-style:italic;font-size:10.4px;color:#000;line-height:14px;text-align:right;">3.7%</div>
<div style="left:719px;top:733px;width:257px;white-space:pre;font-style:italic;font-size:10.4px;color:#000;line-height:14px;text-align:right;">3.6%</div>
<div style="left:781px;top:733px;width:257px;white-space:pre;font-style:italic;font-size:10.4px;color:#000;line-height:14px;text-align:right;">3.4%</div>
<div style="left:843px;top:733px;width:257px;white-space:pre;font-style:italic;font-size:10.4px;color:#000;line-height:14px;text-align:right;">2.9%</div>
<div style="left:905px;top:733px;width:257px;white-space:pre;font-style:italic;font-size:10.4px;color:#000;line-height:14px;text-align:right;">2.7%</div>
<div style="left:967px;top:733px;width:257px;white-space:pre;font-style:italic;font-size:10.4px;color:#000;line-height:14px;text-align:right;">2.5%</div>
<div style="left:1029px;top:733px;width:257px;white-space:pre;font-style:italic;font-size:10.4px;color:#000;line-height:14px;text-align:right;">2.7%</div>
<div style="left:1091px;top:733px;width:257px;white-space:pre;font-style:italic;font-size:10.4px;color:#000;line-height:14px;text-align:right;">2.7%</div>
<div style="left:75px;top:760px;white-space:pre;font-size:10.7px;color:#000;line-height:14px;letter-spacing:0.430px;">SG&amp;A (incl. D&amp;A)</div>
<div style="left:337px;top:760px;width:70px;white-space:pre;font-size:10.7px;color:#000;line-height:14px;text-align:center;letter-spacing:0.426px;text-indent:0.426px;">$000&#x27;s</div>
<div style="left:407px;top:760px;width:78px;white-space:pre;font-weight:bold;font-size:10.5px;color:#000;line-height:14px;text-align:center;letter-spacing:-0.034px;text-indent:-0.034px;">% of LoB D&amp;A</div>
<div style="left:410px;top:774px;width:73px;height:1px;background:#000"></div>
<div style="left:409px;top:760px;width:256px;white-space:pre;font-size:10.7px;color:#0000ff;line-height:14px;text-align:right;">898.0</div>
<div style="left:471px;top:760px;width:256px;white-space:pre;font-size:10.7px;color:#0000ff;line-height:14px;text-align:right;">780.0</div>
<div style="left:533px;top:760px;width:256px;white-space:pre;font-size:10.7px;color:#000;line-height:14px;text-align:right;">911.2</div>
<div style="left:595px;top:760px;width:256px;white-space:pre;font-size:10.7px;color:#000;line-height:14px;text-align:right;">997.6</div>
<div style="left:657px;top:760px;width:256px;white-space:pre;font-size:10.7px;color:#000;line-height:14px;text-align:right;">1,091.1</div>
<div style="left:719px;top:760px;width:256px;white-space:pre;font-size:10.7px;color:#000;line-height:14px;text-align:right;">1,193.7</div>
<div style="left:781px;top:760px;width:256px;white-space:pre;font-size:10.7px;color:#000;line-height:14px;text-align:right;">1,305.9</div>
<div style="left:843px;top:760px;width:256px;white-space:pre;font-size:10.7px;color:#000;line-height:14px;text-align:right;">1,426.9</div>
<div style="left:905px;top:760px;width:256px;white-space:pre;font-size:10.7px;color:#000;line-height:14px;text-align:right;">1,560.0</div>
<div style="left:967px;top:760px;width:256px;white-space:pre;font-size:10.7px;color:#000;line-height:14px;text-align:right;">1,367.3</div>
<div style="left:1029px;top:760px;width:256px;white-space:pre;font-size:10.7px;color:#000;line-height:14px;text-align:right;">1,468.5</div>
<div style="left:1091px;top:760px;width:256px;white-space:pre;font-size:10.7px;color:#000;line-height:14px;text-align:right;">1,580.8</div>
<div style="left:75px;top:774px;white-space:pre;font-size:10.7px;color:#000;line-height:14px;letter-spacing:0.446px;">D&amp;A in SG&amp;A</div>
<div style="left:337px;top:774px;width:70px;white-space:pre;font-size:10.7px;color:#000;line-height:14px;text-align:center;letter-spacing:0.426px;text-indent:0.426px;">$000&#x27;s</div>
<div style="left:407px;top:775px;width:78px;height:14px;background:#fff;border:1px dotted #000;border-right:none;box-sizing:border-box"></div>
<div style="left:407px;top:774px;width:78px;white-space:pre;font-size:10.7px;color:#000;line-height:14px;text-align:center;letter-spacing:0.047px;text-indent:0.047px;">40.0%</div>
<div style="left:409px;top:774px;width:259px;white-space:pre;font-size:10.7px;color:#000;line-height:14px;text-align:right;">(222.8)</div>
<div style="left:471px;top:774px;width:259px;white-space:pre;font-size:10.7px;color:#000;line-height:14px;text-align:right;">(240.0)</div>
<div style="left:533px;top:774px;width:259px;white-space:pre;font-size:10.7px;color:#000;line-height:14px;text-align:right;">(339.3)</div>
<div style="left:595px;top:774px;width:259px;white-space:pre;font-size:10.7px;color:#000;line-height:14px;text-align:right;">(402.9)</div>
<div style="left:657px;top:774px;width:259px;white-space:pre;font-size:10.7px;color:#000;line-height:14px;text-align:right;">(474.4)</div>
<div style="left:719px;top:774px;width:259px;white-space:pre;font-size:10.7px;color:#000;line-height:14px;text-align:right;">(554.8)</div>
<div style="left:781px;top:774px;width:259px;white-space:pre;font-size:10.7px;color:#000;line-height:14px;text-align:right;">(645.2)</div>
<div style="left:843px;top:774px;width:259px;white-space:pre;font-size:10.7px;color:#000;line-height:14px;text-align:right;">(747.1)</div>
<div style="left:905px;top:774px;width:259px;white-space:pre;font-size:10.7px;color:#000;line-height:14px;text-align:right;">(861.8)</div>
<div style="left:967px;top:774px;width:259px;white-space:pre;font-size:10.7px;color:#000;line-height:14px;text-align:right;">(651.6)</div>
<div style="left:1029px;top:774px;width:259px;white-space:pre;font-size:10.7px;color:#000;line-height:14px;text-align:right;">(733.5)</div>
<div style="left:1091px;top:774px;width:259px;white-space:pre;font-size:10.7px;color:#000;line-height:14px;text-align:right;">(826.0)</div>
<div style="left:75px;top:788px;white-space:pre;font-weight:bold;font-size:10.5px;color:#000;line-height:14px;letter-spacing:0.047px;">SG&amp;A (excl. D&amp;A)</div>
<div style="left:337px;top:788px;width:70px;white-space:pre;font-size:10.7px;color:#000;line-height:14px;text-align:center;letter-spacing:0.426px;text-indent:0.426px;">$000&#x27;s</div>
<div style="left:409px;top:788px;width:256px;white-space:pre;font-weight:bold;font-size:10.5px;color:#000;line-height:14px;text-align:right;">675.2</div>
<div style="left:471px;top:788px;width:256px;white-space:pre;font-weight:bold;font-size:10.5px;color:#000;line-height:14px;text-align:right;">540.0</div>
<div style="left:533px;top:788px;width:256px;white-space:pre;font-weight:bold;font-size:10.5px;color:#000;line-height:14px;text-align:right;">571.9</div>
<div style="left:595px;top:788px;width:256px;white-space:pre;font-weight:bold;font-size:10.5px;color:#000;line-height:14px;text-align:right;">594.7</div>
<div style="left:657px;top:788px;width:256px;white-space:pre;font-weight:bold;font-size:10.5px;color:#000;line-height:14px;text-align:right;">616.7</div>
<div style="left:719px;top:788px;width:256px;white-space:pre;font-weight:bold;font-size:10.5px;color:#000;line-height:14px;text-align:right;">638.9</div>
<div style="left:781px;top:788px;width:256px;white-space:pre;font-weight:bold;font-size:10.5px;color:#000;line-height:14px;text-align:right;">660.7</div>
<div style="left:843px;top:788px;width:256px;white-space:pre;font-weight:bold;font-size:10.5px;color:#000;line-height:14px;text-align:right;">679.8</div>
<div style="left:905px;top:788px;width:256px;white-space:pre;font-weight:bold;font-size:10.5px;color:#000;line-height:14px;text-align:right;">698.2</div>
<div style="left:967px;top:788px;width:256px;white-space:pre;font-weight:bold;font-size:10.5px;color:#000;line-height:14px;text-align:right;">715.6</div>
<div style="left:1029px;top:788px;width:256px;white-space:pre;font-weight:bold;font-size:10.5px;color:#000;line-height:14px;text-align:right;">735.0</div>
<div style="left:1091px;top:788px;width:256px;white-space:pre;font-weight:bold;font-size:10.5px;color:#000;line-height:14px;text-align:right;">754.8</div>
<div style="left:72px;top:802px;width:1281px;height:1px;background-image:linear-gradient(90deg,#000 50%,transparent 50%);background-size:2px 1px"></div>
<div style="left:75px;top:803px;white-space:pre;font-style:italic;font-size:10.4px;color:#000;line-height:14px;letter-spacing:0.800px;">Growth</div>
<div style="left:337px;top:803px;width:70px;white-space:pre;font-style:italic;font-size:10.4px;color:#000;line-height:14px;text-align:center;letter-spacing:0.276px;text-indent:0.276px;">Var. %</div>
<div style="left:733px;top:803px;width:62px;height:14px;background:#ffffcc;border:1px dotted #000;box-sizing:border-box"></div>
<div style="left:471px;top:803px;width:257px;white-space:pre;font-style:italic;font-size:10.4px;color:#000;line-height:14px;text-align:right;">-20.0%</div>
<div style="left:533px;top:803px;width:257px;white-space:pre;font-style:italic;font-size:10.4px;color:#000;line-height:14px;text-align:right;">5.9%</div>
<div style="left:595px;top:803px;width:257px;white-space:pre;font-style:italic;font-size:10.4px;color:#000;line-height:14px;text-align:right;">4.0%</div>
<div style="left:657px;top:803px;width:257px;white-space:pre;font-style:italic;font-size:10.4px;color:#000;line-height:14px;text-align:right;">3.7%</div>
<div style="left:719px;top:803px;width:257px;white-space:pre;font-style:italic;font-size:10.4px;color:#000;line-height:14px;text-align:right;">3.6%</div>
<div style="left:781px;top:803px;width:257px;white-space:pre;font-style:italic;font-size:10.4px;color:#000;line-height:14px;text-align:right;">3.4%</div>
<div style="left:843px;top:803px;width:257px;white-space:pre;font-style:italic;font-size:10.4px;color:#000;line-height:14px;text-align:right;">2.9%</div>
<div style="left:905px;top:803px;width:257px;white-space:pre;font-style:italic;font-size:10.4px;color:#000;line-height:14px;text-align:right;">2.7%</div>
<div style="left:967px;top:803px;width:257px;white-space:pre;font-style:italic;font-size:10.4px;color:#000;line-height:14px;text-align:right;">2.5%</div>
<div style="left:1029px;top:803px;width:257px;white-space:pre;font-style:italic;font-size:10.4px;color:#000;line-height:14px;text-align:right;">2.7%</div>
<div style="left:1091px;top:803px;width:257px;white-space:pre;font-style:italic;font-size:10.4px;color:#000;line-height:14px;text-align:right;">2.7%</div>
<div style="left:407px;top:816px;width:78px;white-space:pre;font-weight:bold;font-size:10.5px;color:#000;line-height:14px;text-align:center;letter-spacing:0.245px;text-indent:0.245px;">Rate</div>
<div style="left:410px;top:830px;width:73px;height:1px;background:#000"></div>
<div style="left:75px;top:830px;white-space:pre;font-size:10.7px;color:#000;line-height:14px;letter-spacing:0.940px;">Website Comissions</div>
<div style="left:337px;top:830px;width:70px;white-space:pre;font-weight:bold;font-size:10.5px;color:#000;line-height:14px;text-align:center;letter-spacing:0.319px;text-indent:0.319px;">$000&#x27;s</div>
<div style="left:407px;top:831px;width:78px;height:14px;background:#ffffcc;border:1px dotted #000;border-right:none;box-sizing:border-box"></div>
<div style="left:407px;top:830px;width:78px;white-space:pre;font-size:10.7px;color:#0000ff;line-height:14px;text-align:center;letter-spacing:-0.125px;text-indent:-0.125px;">1.5%</div>
<div style="left:409px;top:830px;width:256px;white-space:pre;font-size:10.7px;color:#0000ff;line-height:14px;text-align:right;">89.0</div>
<div style="left:471px;top:830px;width:256px;white-space:pre;font-size:10.7px;color:#0000ff;line-height:14px;text-align:right;">102.0</div>
<div style="left:533px;top:830px;width:256px;white-space:pre;font-size:10.7px;color:#000;line-height:14px;text-align:right;">123.2</div>
<div style="left:595px;top:830px;width:256px;white-space:pre;font-size:10.7px;color:#000;line-height:14px;text-align:right;">141.0</div>
<div style="left:657px;top:830px;width:256px;white-space:pre;font-size:10.7px;color:#000;line-height:14px;text-align:right;">161.2</div>
<div style="left:719px;top:830px;width:256px;white-space:pre;font-size:10.7px;color:#000;line-height:14px;text-align:right;">184.5</div>
<div style="left:781px;top:830px;width:256px;white-space:pre;font-size:10.7px;color:#000;line-height:14px;text-align:right;">211.0</div>
<div style="left:843px;top:830px;width:256px;white-space:pre;font-size:10.7px;color:#000;line-height:14px;text-align:right;">241.4</div>
<div style="left:905px;top:830px;width:256px;white-space:pre;font-size:10.7px;color:#000;line-height:14px;text-align:right;">276.2</div>
<div style="left:967px;top:830px;width:256px;white-space:pre;font-size:10.7px;color:#000;line-height:14px;text-align:right;">316.0</div>
<div style="left:1029px;top:830px;width:256px;white-space:pre;font-size:10.7px;color:#000;line-height:14px;text-align:right;">361.5</div>
<div style="left:1091px;top:830px;width:256px;white-space:pre;font-size:10.7px;color:#000;line-height:14px;text-align:right;">413.5</div>
<div style="left:75px;top:858px;white-space:pre;font-weight:bold;font-size:10.5px;color:#000;line-height:14px;letter-spacing:-0.219px;">EBITDA</div>
<div style="left:337px;top:858px;width:70px;white-space:pre;font-weight:bold;font-size:10.5px;color:#000;line-height:14px;text-align:center;letter-spacing:0.319px;text-indent:0.319px;">$000&#x27;s</div>
<div style="left:409px;top:858px;width:256px;white-space:pre;font-weight:bold;font-size:10.5px;color:#0000ff;line-height:14px;text-align:right;">1,365.0</div>
<div style="left:471px;top:858px;width:256px;white-space:pre;font-weight:bold;font-size:10.5px;color:#0000ff;line-height:14px;text-align:right;">1,248.0</div>
<div style="left:533px;top:858px;width:256px;white-space:pre;font-weight:bold;font-size:10.5px;color:#000;line-height:14px;text-align:right;">1,266.3</div>
<div style="left:595px;top:858px;width:256px;white-space:pre;font-weight:bold;font-size:10.5px;color:#000;line-height:14px;text-align:right;">1,678.7</div>
<div style="left:657px;top:858px;width:256px;white-space:pre;font-weight:bold;font-size:10.5px;color:#000;line-height:14px;text-align:right;">2,038.4</div>
<div style="left:719px;top:858px;width:256px;white-space:pre;font-weight:bold;font-size:10.5px;color:#000;line-height:14px;text-align:right;">2,466.0</div>
<div style="left:781px;top:858px;width:256px;white-space:pre;font-weight:bold;font-size:10.5px;color:#000;line-height:14px;text-align:right;">2,985.1</div>
<div style="left:843px;top:858px;width:256px;white-space:pre;font-weight:bold;font-size:10.5px;color:#000;line-height:14px;text-align:right;">3,651.0</div>
<div style="left:905px;top:858px;width:256px;white-space:pre;font-weight:bold;font-size:10.5px;color:#000;line-height:14px;text-align:right;">4,459.3</div>
<div style="left:967px;top:858px;width:256px;white-space:pre;font-weight:bold;font-size:10.5px;color:#000;line-height:14px;text-align:right;">5,439.0</div>
<div style="left:1029px;top:858px;width:256px;white-space:pre;font-weight:bold;font-size:10.5px;color:#000;line-height:14px;text-align:right;">6,555.8</div>
<div style="left:1091px;top:858px;width:256px;white-space:pre;font-weight:bold;font-size:10.5px;color:#000;line-height:14px;text-align:right;">7,863.9</div>
<div style="left:75px;top:873px;white-space:pre;font-style:italic;font-size:10.4px;color:#000;line-height:14px;letter-spacing:0.250px;">EBITDA Margin</div>
<div style="left:337px;top:873px;width:70px;white-space:pre;font-style:italic;font-size:10.4px;color:#000;line-height:14px;text-align:center;letter-spacing:0.276px;text-indent:0.276px;">Var. %</div>
<div style="left:409px;top:873px;width:257px;white-space:pre;font-style:italic;font-size:10.4px;color:#000;line-height:14px;text-align:right;">22.3%</div>
<div style="left:471px;top:873px;width:257px;white-space:pre;font-style:italic;font-size:10.4px;color:#000;line-height:14px;text-align:right;">17.4%</div>
<div style="left:533px;top:873px;width:257px;white-space:pre;font-style:italic;font-size:10.4px;color:#000;line-height:14px;text-align:right;">15.4%</div>
<div style="left:595px;top:873px;width:257px;white-space:pre;font-style:italic;font-size:10.4px;color:#000;line-height:14px;text-align:right;">17.9%</div>
<div style="left:657px;top:873px;width:257px;white-space:pre;font-style:italic;font-size:10.4px;color:#000;line-height:14px;text-align:right;">19.0%</div>
<div style="left:719px;top:873px;width:257px;white-space:pre;font-style:italic;font-size:10.4px;color:#000;line-height:14px;text-align:right;">20.1%</div>
<div style="left:781px;top:873px;width:257px;white-space:pre;font-style:italic;font-size:10.4px;color:#000;line-height:14px;text-align:right;">21.2%</div>
<div style="left:843px;top:873px;width:257px;white-space:pre;font-style:italic;font-size:10.4px;color:#000;line-height:14px;text-align:right;">22.7%</div>
<div style="left:905px;top:873px;width:257px;white-space:pre;font-style:italic;font-size:10.4px;color:#000;line-height:14px;text-align:right;">24.2%</div>
<div style="left:967px;top:873px;width:257px;white-space:pre;font-style:italic;font-size:10.4px;color:#000;line-height:14px;text-align:right;">25.8%</div>
<div style="left:1029px;top:873px;width:257px;white-space:pre;font-style:italic;font-size:10.4px;color:#000;line-height:14px;text-align:right;">27.2%</div>
<div style="left:1091px;top:873px;width:257px;white-space:pre;font-style:italic;font-size:10.4px;color:#000;line-height:14px;text-align:right;">28.5%</div>
<div style="left:407px;top:886px;width:78px;white-space:pre;font-weight:bold;font-size:10.5px;color:#000;line-height:14px;text-align:center;letter-spacing:0.111px;text-indent:0.111px;">% of Total D&amp;A</div>
<div style="left:410px;top:900px;width:73px;height:1px;background:#000"></div>
<div style="left:75px;top:900px;white-space:pre;font-size:10.7px;color:#000;line-height:14px;letter-spacing:0.908px;">D&amp;A</div>
<div style="left:337px;top:900px;width:70px;white-space:pre;font-size:10.7px;color:#000;line-height:14px;text-align:center;letter-spacing:0.426px;text-indent:0.426px;">$000&#x27;s</div>
<div style="left:407px;top:901px;width:78px;height:14px;background:#ffffcc;border:1px dotted #000;border-right:none;box-sizing:border-box"></div>
<div style="left:407px;top:900px;width:78px;white-space:pre;font-size:10.7px;color:#000;line-height:14px;text-align:center;letter-spacing:0.047px;text-indent:0.047px;">39.0%</div>
<div style="left:409px;top:900px;width:259px;white-space:pre;font-size:10.7px;color:#000;line-height:14px;text-align:right;">(557.0)</div>
<div style="left:471px;top:900px;width:259px;white-space:pre;font-size:10.7px;color:#000;line-height:14px;text-align:right;">(600.0)</div>
<div style="left:533px;top:900px;width:259px;white-space:pre;font-size:10.7px;color:#000;line-height:14px;text-align:right;">(848.4)</div>
<div style="left:595px;top:900px;width:259px;white-space:pre;font-size:10.7px;color:#000;line-height:14px;text-align:right;">(1,007.1)</div>
<div style="left:657px;top:900px;width:259px;white-space:pre;font-size:10.7px;color:#000;line-height:14px;text-align:right;">(1,186.0)</div>
<div style="left:719px;top:900px;width:259px;white-space:pre;font-size:10.7px;color:#000;line-height:14px;text-align:right;">(1,387.0)</div>
<div style="left:781px;top:900px;width:259px;white-space:pre;font-size:10.7px;color:#000;line-height:14px;text-align:right;">(1,613.1)</div>
<div style="left:843px;top:900px;width:259px;white-space:pre;font-size:10.7px;color:#000;line-height:14px;text-align:right;">(1,867.7)</div>
<div style="left:905px;top:900px;width:259px;white-space:pre;font-size:10.7px;color:#000;line-height:14px;text-align:right;">(2,154.5)</div>
<div style="left:967px;top:900px;width:259px;white-space:pre;font-size:10.7px;color:#000;line-height:14px;text-align:right;">(1,629.1)</div>
<div style="left:1029px;top:900px;width:259px;white-space:pre;font-size:10.7px;color:#000;line-height:14px;text-align:right;">(1,833.8)</div>
<div style="left:1091px;top:900px;width:259px;white-space:pre;font-size:10.7px;color:#000;line-height:14px;text-align:right;">(2,064.9)</div>
<div style="left:72px;top:914px;width:1281px;height:1px;background-image:linear-gradient(90deg,#000 50%,transparent 50%);background-size:2px 1px"></div>
<div style="left:75px;top:914px;white-space:pre;font-weight:bold;font-size:10.5px;color:#000;line-height:14px;letter-spacing:-0.807px;">EBIT</div>
<div style="left:337px;top:914px;width:70px;white-space:pre;font-weight:bold;font-size:10.5px;color:#000;line-height:14px;text-align:center;letter-spacing:0.319px;text-indent:0.319px;">$000&#x27;s</div>
<div style="left:409px;top:914px;width:256px;white-space:pre;font-weight:bold;font-size:10.5px;color:#000;line-height:14px;text-align:right;">808.0</div>
<div style="left:471px;top:914px;width:256px;white-space:pre;font-weight:bold;font-size:10.5px;color:#000;line-height:14px;text-align:right;">648.0</div>
<div style="left:533px;top:914px;width:256px;white-space:pre;font-weight:bold;font-size:10.5px;color:#000;line-height:14px;text-align:right;">417.9</div>
<div style="left:595px;top:914px;width:256px;white-space:pre;font-weight:bold;font-size:10.5px;color:#000;line-height:14px;text-align:right;">671.6</div>
<div style="left:657px;top:914px;width:256px;white-space:pre;font-weight:bold;font-size:10.5px;color:#000;line-height:14px;text-align:right;">852.4</div>
<div style="left:719px;top:914px;width:256px;white-space:pre;font-weight:bold;font-size:10.5px;color:#000;line-height:14px;text-align:right;">1,079.0</div>
<div style="left:781px;top:914px;width:256px;white-space:pre;font-weight:bold;font-size:10.5px;color:#000;line-height:14px;text-align:right;">1,372.0</div>
<div style="left:843px;top:914px;width:256px;white-space:pre;font-weight:bold;font-size:10.5px;color:#000;line-height:14px;text-align:right;">1,783.3</div>
<div style="left:905px;top:914px;width:256px;white-space:pre;font-weight:bold;font-size:10.5px;color:#000;line-height:14px;text-align:right;">2,304.9</div>
<div style="left:967px;top:914px;width:256px;white-space:pre;font-weight:bold;font-size:10.5px;color:#000;line-height:14px;text-align:right;">3,809.9</div>
<div style="left:1029px;top:914px;width:256px;white-space:pre;font-weight:bold;font-size:10.5px;color:#000;line-height:14px;text-align:right;">4,722.0</div>
<div style="left:1091px;top:914px;width:256px;white-space:pre;font-weight:bold;font-size:10.5px;color:#000;line-height:14px;text-align:right;">5,799.0</div>
<div style="left:75px;top:929px;white-space:pre;font-style:italic;font-size:10.4px;color:#000;line-height:14px;letter-spacing:0.325px;">EBIT Margin</div>
<div style="left:337px;top:929px;width:70px;white-space:pre;font-style:italic;font-size:10.4px;color:#000;line-height:14px;text-align:center;letter-spacing:0.276px;text-indent:0.276px;">Var. %</div>
<div style="left:409px;top:929px;width:257px;white-space:pre;font-style:italic;font-size:10.4px;color:#000;line-height:14px;text-align:right;">13.2%</div>
<div style="left:471px;top:929px;width:257px;white-space:pre;font-style:italic;font-size:10.4px;color:#000;line-height:14px;text-align:right;">9.0%</div>
<div style="left:533px;top:929px;width:257px;white-space:pre;font-style:italic;font-size:10.4px;color:#000;line-height:14px;text-align:right;">5.1%</div>
<div style="left:595px;top:929px;width:257px;white-space:pre;font-style:italic;font-size:10.4px;color:#000;line-height:14px;text-align:right;">7.1%</div>
<div style="left:657px;top:929px;width:257px;white-space:pre;font-style:italic;font-size:10.4px;color:#000;line-height:14px;text-align:right;">7.9%</div>
<div style="left:719px;top:929px;width:257px;white-space:pre;font-style:italic;font-size:10.4px;color:#000;line-height:14px;text-align:right;">8.8%</div>
<div style="left:781px;top:929px;width:257px;white-space:pre;font-style:italic;font-size:10.4px;color:#000;line-height:14px;text-align:right;">9.8%</div>
<div style="left:843px;top:929px;width:257px;white-space:pre;font-style:italic;font-size:10.4px;color:#000;line-height:14px;text-align:right;">11.1%</div>
<div style="left:905px;top:929px;width:257px;white-space:pre;font-style:italic;font-size:10.4px;color:#000;line-height:14px;text-align:right;">12.5%</div>
<div style="left:967px;top:929px;width:257px;white-space:pre;font-style:italic;font-size:10.4px;color:#000;line-height:14px;text-align:right;">18.1%</div>
<div style="left:1029px;top:929px;width:257px;white-space:pre;font-style:italic;font-size:10.4px;color:#000;line-height:14px;text-align:right;">19.6%</div>
<div style="left:1091px;top:929px;width:257px;white-space:pre;font-style:italic;font-size:10.4px;color:#000;line-height:14px;text-align:right;">21.0%</div>
<div style="left:61px;top:956px;white-space:pre;font-size:10.7px;font-size:10.7px;color:#000;line-height:14px;">x</div>
<div style="left:75px;top:956px;white-space:pre;font-weight:bold;font-size:10.5px;line-height:14px;color:#000;letter-spacing:-0.205px;">Product 2</div>
<div style="left:85px;top:970px;white-space:pre;font-weight:bold;font-size:10.5px;color:#000;line-height:14px;letter-spacing:0.249px;">Volume</div>
<div style="left:337px;top:970px;width:70px;white-space:pre;font-weight:bold;font-size:10.5px;color:#000;line-height:14px;text-align:center;letter-spacing:-0.073px;text-indent:-0.073px;">000s units</div>
<div style="left:407px;top:970px;width:78px;white-space:pre;font-weight:bold;font-size:10.5px;color:#000;line-height:14px;text-align:center;letter-spacing:-0.364px;text-indent:-0.364px;">YoY Change</div>
<div style="left:410px;top:984px;width:73px;height:1px;background:#000"></div>
<div style="left:409px;top:970px;width:256px;white-space:pre;font-weight:bold;font-size:10.5px;color:#000;line-height:14px;text-align:right;">1,676.1</div>
<div style="left:471px;top:970px;width:256px;white-space:pre;font-weight:bold;font-size:10.5px;color:#000;line-height:14px;text-align:right;">1,725.6</div>
<div style="left:533px;top:970px;width:256px;white-space:pre;font-size:10.7px;color:#000;line-height:14px;text-align:right;">1,898.1</div>
<div style="left:595px;top:970px;width:256px;white-space:pre;font-size:10.7px;color:#000;line-height:14px;text-align:right;">2,088.0</div>
<div style="left:657px;top:970px;width:256px;white-space:pre;font-size:10.7px;color:#000;line-height:14px;text-align:right;">2,296.7</div>
<div style="left:719px;top:970px;width:256px;white-space:pre;font-size:10.7px;color:#000;line-height:14px;text-align:right;">2,526.4</div>
<div style="left:781px;top:970px;width:256px;white-space:pre;font-size:10.7px;color:#000;line-height:14px;text-align:right;">2,779.1</div>
<div style="left:843px;top:970px;width:256px;white-space:pre;font-size:10.7px;color:#000;line-height:14px;text-align:right;">3,057.0</div>
<div style="left:905px;top:970px;width:256px;white-space:pre;font-size:10.7px;color:#000;line-height:14px;text-align:right;">3,362.7</div>
<div style="left:967px;top:970px;width:256px;white-space:pre;font-size:10.7px;color:#000;line-height:14px;text-align:right;">3,698.9</div>
<div style="left:1029px;top:970px;width:256px;white-space:pre;font-size:10.7px;color:#000;line-height:14px;text-align:right;">4,068.8</div>
<div style="left:1091px;top:970px;width:256px;white-space:pre;font-size:10.7px;color:#000;line-height:14px;text-align:right;">4,475.7</div>
<div style="left:95px;top:985px;white-space:pre;font-style:italic;font-size:10.4px;color:#000;line-height:14px;letter-spacing:0.800px;">Growth</div>
<div style="left:337px;top:985px;width:70px;white-space:pre;font-style:italic;font-size:10.4px;color:#000;line-height:14px;text-align:center;letter-spacing:0.276px;text-indent:0.276px;">Var. %</div>
<div style="left:407px;top:985px;width:78px;height:14px;background:#ffffcc;border:1px dotted #000;border-right:none;box-sizing:border-box"></div>
<div style="left:407px;top:984px;width:78px;white-space:pre;font-size:10.7px;color:#0000ff;line-height:14px;text-align:center;letter-spacing:0.047px;text-indent:0.047px;">10.0%</div>
<div style="left:471px;top:985px;width:257px;white-space:pre;font-style:italic;font-size:10.4px;color:#000;line-height:14px;text-align:right;">3.0%</div>
<div style="left:533px;top:985px;width:257px;white-space:pre;font-style:italic;font-size:10.4px;color:#000;line-height:14px;text-align:right;">10.0%</div>
<div style="left:595px;top:985px;width:257px;white-space:pre;font-style:italic;font-size:10.4px;color:#000;line-height:14px;text-align:right;">10.0%</div>
<div style="left:657px;top:985px;width:257px;white-space:pre;font-style:italic;font-size:10.4px;color:#000;line-height:14px;text-align:right;">10.0%</div>
<div style="left:719px;top:985px;width:257px;white-space:pre;font-style:italic;font-size:10.4px;color:#000;line-height:14px;text-align:right;">10.0%</div>
<div style="left:781px;top:985px;width:257px;white-space:pre;font-style:italic;font-size:10.4px;color:#000;line-height:14px;text-align:right;">10.0%</div>
<div style="left:843px;top:985px;width:257px;white-space:pre;font-style:italic;font-size:10.4px;color:#000;line-height:14px;text-align:right;">10.0%</div>
<div style="left:905px;top:985px;width:257px;white-space:pre;font-style:italic;font-size:10.4px;color:#000;line-height:14px;text-align:right;">10.0%</div>
<div style="left:967px;top:985px;width:257px;white-space:pre;font-style:italic;font-size:10.4px;color:#000;line-height:14px;text-align:right;">10.0%</div>
<div style="left:1029px;top:985px;width:257px;white-space:pre;font-style:italic;font-size:10.4px;color:#000;line-height:14px;text-align:right;">10.0%</div>
<div style="left:1091px;top:985px;width:257px;white-space:pre;font-style:italic;font-size:10.4px;color:#000;line-height:14px;text-align:right;">10.0%</div>
<svg style="left:665px;top:593px" width="6" height="6"><path d="M0 0 L6 0 L6 6 Z" fill="#e00"/></svg>
<svg style="left:727px;top:593px" width="6" height="6"><path d="M0 0 L6 0 L6 6 Z" fill="#e00"/></svg>
<svg style="left:665px;top:635px" width="6" height="6"><path d="M0 0 L6 0 L6 6 Z" fill="#e00"/></svg>
<svg style="left:727px;top:635px" width="6" height="6"><path d="M0 0 L6 0 L6 6 Z" fill="#e00"/></svg>
<svg style="left:665px;top:761px" width="6" height="6"><path d="M0 0 L6 0 L6 6 Z" fill="#e00"/></svg>
<svg style="left:727px;top:761px" width="6" height="6"><path d="M0 0 L6 0 L6 6 Z" fill="#e00"/></svg>
<svg style="left:665px;top:831px" width="6" height="6"><path d="M0 0 L6 0 L6 6 Z" fill="#e00"/></svg>
<svg style="left:727px;top:831px" width="6" height="6"><path d="M0 0 L6 0 L6 6 Z" fill="#e00"/></svg>
<svg style="left:665px;top:859px" width="6" height="6"><path d="M0 0 L6 0 L6 6 Z" fill="#e00"/></svg>
<svg style="left:727px;top:859px" width="6" height="6"><path d="M0 0 L6 0 L6 6 Z" fill="#e00"/></svg>
<div style="left:733px;top:312px;width:1px;height:98px;background-image:linear-gradient(#000 50%,#fff 50%);background-size:1px 2px"></div>
<div style="left:733px;top:424px;width:1px;height:566px;background-image:linear-gradient(#000 50%,#fff 50%);background-size:1px 2px"></div>
<div style="left:485px;top:227px;width:1px;height:763px;background:#a8a8a8"></div>
<div style="left:58px;top:382px;width:1461px;height:1px;background:#a8a8a8"></div>
<div style="left:6px;top:413px;width:6px;height:2px;background:#8c8c8c"></div>
<div style="left:6px;top:413px;width:2px;height:53px;background:#8c8c8c"></div>
<div style="left:21px;top:417px;width:2px;height:2px;background:#7a7a7a"></div>
<div style="left:21px;top:431px;width:2px;height:2px;background:#7a7a7a"></div>
<div style="left:21px;top:445px;width:2px;height:2px;background:#7a7a7a"></div>
<div style="left:21px;top:459px;width:2px;height:2px;background:#7a7a7a"></div>
<div style="left:2px;top:468px;width:1px;height:11px;background:#6e7382"></div>
<div style="left:16px;top:468px;width:1px;height:11px;background:#6e7382"></div>
<div style="left:6px;top:474px;width:8px;height:2px;background:#505050"></div>
<div style="left:6px;top:525px;width:6px;height:2px;background:#8c8c8c"></div>
<div style="left:6px;top:525px;width:2px;height:417px;background:#8c8c8c"></div>
<div style="left:21px;top:529px;width:2px;height:2px;background:#7a7a7a"></div>
<div style="left:21px;top:543px;width:2px;height:2px;background:#7a7a7a"></div>
<div style="left:21px;top:557px;width:2px;height:2px;background:#7a7a7a"></div>
<div style="left:21px;top:571px;width:2px;height:2px;background:#7a7a7a"></div>
<div style="left:21px;top:585px;width:2px;height:2px;background:#7a7a7a"></div>
<div style="left:21px;top:599px;width:2px;height:2px;background:#7a7a7a"></div>
<div style="left:21px;top:613px;width:2px;height:2px;background:#7a7a7a"></div>
<div style="left:21px;top:627px;width:2px;height:2px;background:#7a7a7a"></div>
<div style="left:21px;top:641px;width:2px;height:2px;background:#7a7a7a"></div>
<div style="left:21px;top:655px;width:2px;height:2px;background:#7a7a7a"></div>
<div style="left:21px;top:669px;width:2px;height:2px;background:#7a7a7a"></div>
<div style="left:21px;top:683px;width:2px;height:2px;background:#7a7a7a"></div>
<div style="left:21px;top:697px;width:2px;height:2px;background:#7a7a7a"></div>
<div style="left:21px;top:711px;width:2px;height:2px;background:#7a7a7a"></div>
<div style="left:21px;top:725px;width:2px;height:2px;background:#7a7a7a"></div>
<div style="left:21px;top:739px;width:2px;height:2px;background:#7a7a7a"></div>
<div style="left:21px;top:753px;width:2px;height:2px;background:#7a7a7a"></div>
<div style="left:21px;top:767px;width:2px;height:2px;background:#7a7a7a"></div>
<div style="left:21px;top:781px;width:2px;height:2px;background:#7a7a7a"></div>
<div style="left:21px;top:795px;width:2px;height:2px;background:#7a7a7a"></div>
<div style="left:21px;top:809px;width:2px;height:2px;background:#7a7a7a"></div>
<div style="left:21px;top:823px;width:2px;height:2px;background:#7a7a7a"></div>
<div style="left:21px;top:837px;width:2px;height:2px;background:#7a7a7a"></div>
<div style="left:21px;top:851px;width:2px;height:2px;background:#7a7a7a"></div>
<div style="left:21px;top:865px;width:2px;height:2px;background:#7a7a7a"></div>
<div style="left:21px;top:879px;width:2px;height:2px;background:#7a7a7a"></div>
<div style="left:21px;top:893px;width:2px;height:2px;background:#7a7a7a"></div>
<div style="left:21px;top:907px;width:2px;height:2px;background:#7a7a7a"></div>
<div style="left:21px;top:921px;width:2px;height:2px;background:#7a7a7a"></div>
<div style="left:21px;top:935px;width:2px;height:2px;background:#7a7a7a"></div>
<div style="left:2px;top:944px;width:1px;height:11px;background:#6e7382"></div>
<div style="left:16px;top:944px;width:1px;height:11px;background:#6e7382"></div>
<div style="left:6px;top:950px;width:8px;height:2px;background:#505050"></div>
<div style="left:6px;top:973px;width:6px;height:2px;background:#8c8c8c"></div>
<div style="left:6px;top:973px;width:2px;height:17px;background:#8c8c8c"></div>
<div style="left:21px;top:977px;width:2px;height:2px;background:#7a7a7a"></div>
<div style="left:0px;top:990px;width:1519px;height:28px;background:#e6e6e6"></div>
<div style="left:0px;top:990px;width:1519px;height:1px;background:#c8c8c8"></div>
<svg style="left:25px;top:998px" width="8" height="10"><path d="M6 1 L2 5 L6 9" stroke="#b8b8b8" stroke-width="1.2" fill="none"/></svg>
<svg style="left:54px;top:998px" width="8" height="10"><path d="M2 1 L6 5 L2 9" stroke="#b8b8b8" stroke-width="1.2" fill="none"/></svg>
<div style="left:100px;top:995px;width:1px;height:19px;background:#9a9a9a"></div>
<div style="left:103px;top:993px;width:55px;height:22px;background:#1ba1e2"></div>
<div style="left:103px;top:996px;width:55px;white-space:pre;color:#1a1a1a;font-size:13px;line-height:16px;text-align:center;">Cover</div>
<div style="left:159px;top:990px;width:79px;height:25px;background:#ffffff"></div>
<div style="left:159px;top:990px;width:1px;height:25px;background:#9a9a9a"></div>
<div style="left:237px;top:990px;width:1px;height:25px;background:#9a9a9a"></div>
<div style="left:160px;top:1013px;width:77px;height:2px;background:#217346"></div>
<div style="left:160px;top:995px;width:77px;white-space:pre;color:#217346;font-size:13px;font-weight:bold;line-height:16px;text-align:center;">Build-Up</div>
<div style="left:249px;top:996px;white-space:pre;color:#444;font-size:13px;line-height:16px;">FS</div>
<div style="left:275px;top:995px;width:1px;height:19px;background:#aaa"></div>
<div style="left:287px;top:996px;white-space:pre;color:#444;font-size:13px;line-height:16px;">DCF</div>
<div style="left:324px;top:995px;width:1px;height:19px;background:#aaa"></div>
<div style="left:336px;top:996px;white-space:pre;color:#444;font-size:13px;line-height:16px;">WACC</div>
<div style="left:385px;top:995px;width:1px;height:19px;background:#aaa"></div>
<svg style="left:419px;top:995px" width="17" height="17"><circle cx="8.5" cy="8.5" r="7.3" stroke="#777" stroke-width="1.1" fill="none"/><path d="M8.5 4.5 V12.5 M4.5 8.5 H12.5" stroke="#777" stroke-width="1.1"/></svg>
<div style="left:1152px;top:999px;width:2px;height:2px;background:#aaa"></div>
<div style="left:1152px;top:1003px;width:2px;height:2px;background:#aaa"></div>
<div style="left:1152px;top:1007px;width:2px;height:2px;background:#aaa"></div>
<div style="left:1169px;top:997px;width:360px;height:15px;background:#fff;border:1px solid #9c9c9c;box-sizing:border-box"></div>
<div style="left:1184px;top:997px;width:1px;height:15px;background:#9c9c9c"></div>
<svg style="left:1173px;top:1000px" width="8" height="9"><path d="M6 0.5 L1 4.5 L6 8.5 Z" fill="#222"/></svg>
<div style="left:0px;top:1018px;width:1519px;height:11px;background:#f3f2f1"></div>
<div style="left:0px;top:1018px;width:1519px;height:1px;background:#d6d6d6"></div>
<div style="left:12px;top:1022px;white-space:pre;color:#444;font-size:12px;line-height:16px;letter-spacing:-0.922px;">Ready</div>
<svg style="left:62px;top:1022px" width="13" height="9"><circle cx="6" cy="3" r="2" stroke="#555" fill="none"/><path d="M1 3 H4 M8 3 H12" stroke="#555"/></svg>
<div style="left:79px;top:1022px;white-space:pre;color:#333;font-size:12px;font-weight:bold;line-height:16px;letter-spacing:-0.736px;">Accessibility: Investigate</div>
<div style="left:1508px;top:1024px;width:12px;height:6px;border:1px solid #555;box-sizing:border-box;background:#fff"></div>
</body></html>
